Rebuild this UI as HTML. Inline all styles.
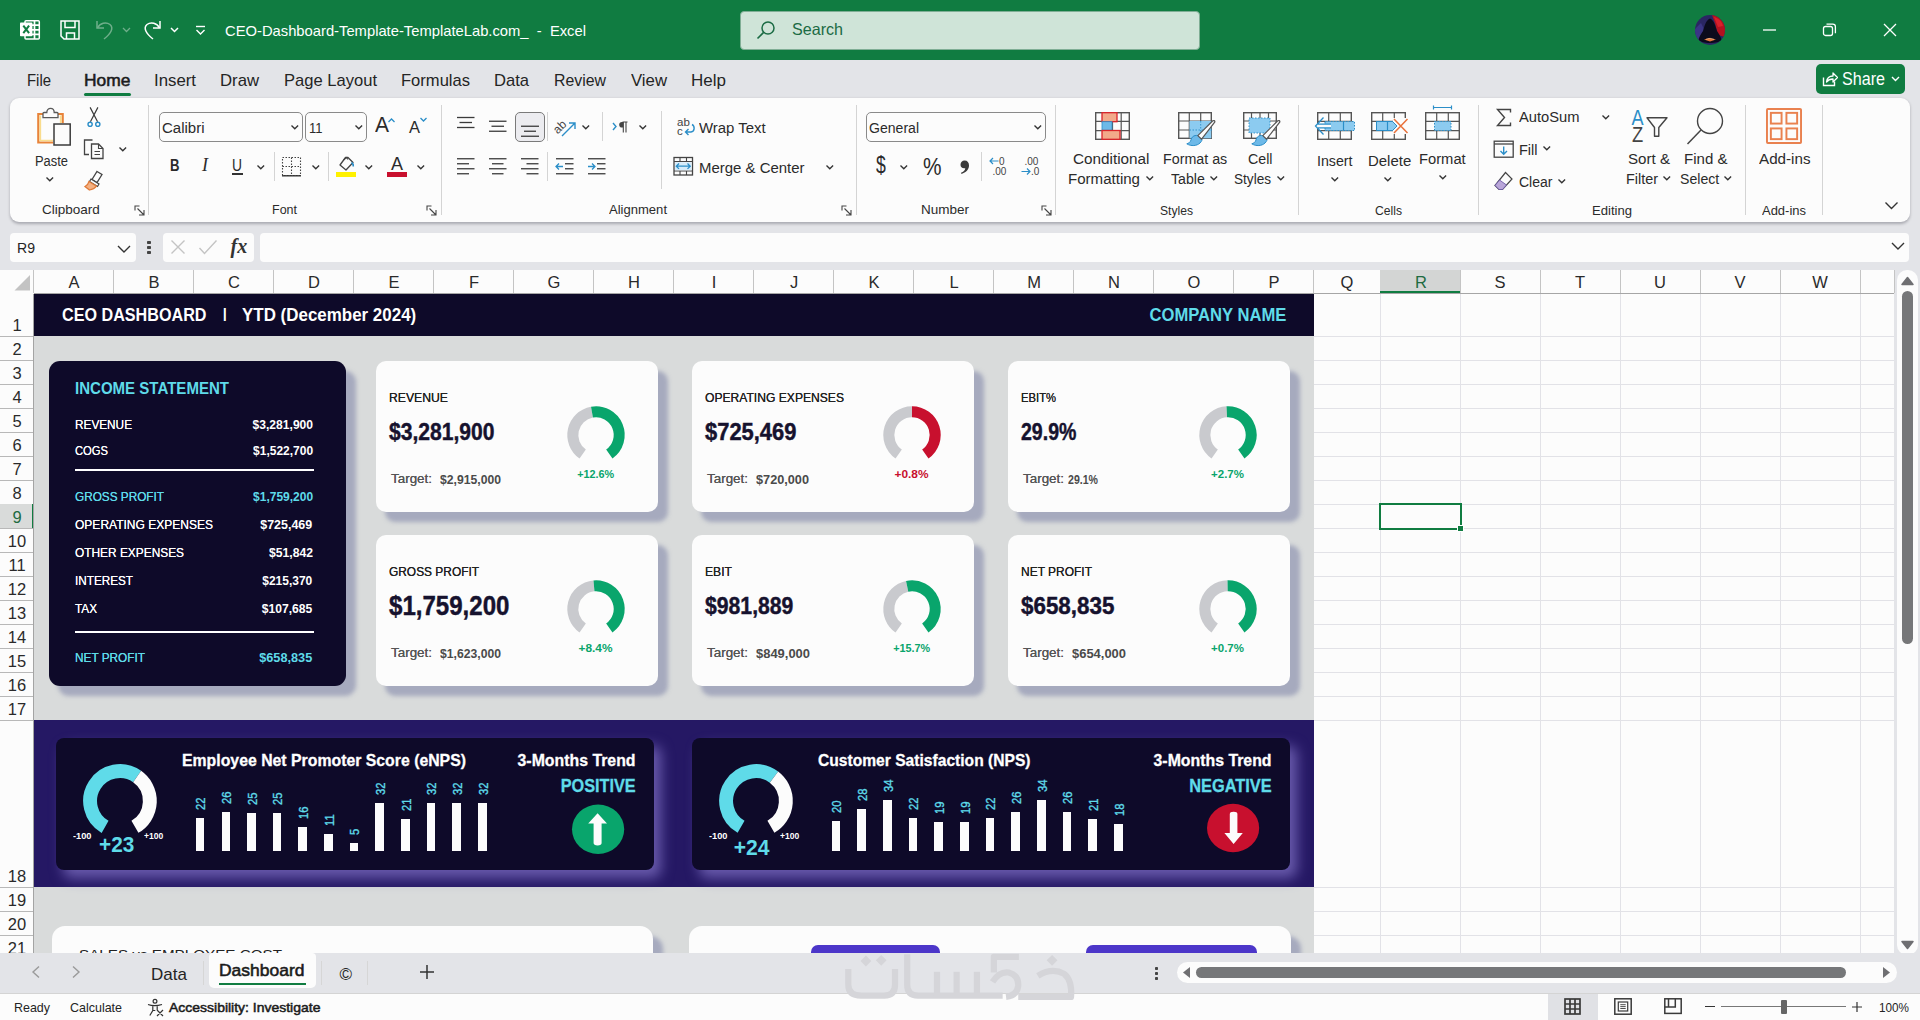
<!DOCTYPE html><html><head><meta charset="utf-8"><title>Excel</title><style>
html,body{margin:0;padding:0}body{width:1920px;height:1020px;overflow:hidden;position:relative;background:#E3E4E8;font-family:"Liberation Sans",sans-serif;}
div,svg{box-sizing:border-box}
</style></head><body>
<div style="position:absolute;left:0px;top:0px;width:1920px;height:60px;background:#107C41;"></div>
<svg style="position:absolute;left:20px;top:19px;" width="22" height="22" viewBox="0 0 22 22"><g fill="none" stroke="#fff" stroke-width="1.500"><rect x="5" y="1.700" width="14.300" height="18.300" rx="1"/><path d="M12 6.200h7.300M12 10.800h7.300M12 15.400h7.300M14.500 1.700v18.300" stroke-width="1.700"/></g><rect x="0" y="3.600" width="12.400" height="13.600" rx="0.800" fill="#fff"/><path d="M3.300 6.600l5.800 7.600M9.100 6.600l-5.800 7.600" stroke="#107C41" stroke-width="2"/></svg>
<svg style="position:absolute;left:60px;top:20px;" width="20" height="20" viewBox="0 0 20 20"><g fill="none" stroke="#fff" stroke-width="1.500"><path d="M1 1h18v18H4l-3-3z"/><path d="M5 1v6.500h10V1M6.500 19v-6h8v6"/></g></svg>
<svg style="position:absolute;left:96px;top:20px;" width="20" height="20" viewBox="0 0 20 20"><g fill="none" stroke="#6fae8a" stroke-width="1.5"><path d="M1 1v7h7"/><path d="M1.5 8C4 3 10 1.5 14 4.5c4 3.5 1 9-6 14.5"/></g></svg>
<svg style="position:absolute;left:122px;top:27px;" width="9" height="6" viewBox="0 0 9 6"><path d="M1 1l3.5 3.5L8 1" fill="none" stroke="#6fae8a" stroke-width="1.3"/></svg>
<svg style="position:absolute;left:141px;top:20px;" width="20" height="20" viewBox="0 0 20 20"><g fill="none" stroke="#fff" stroke-width="1.5"><path d="M19 1v7h-7"/><path d="M18.5 8C16 3 10 1.5 6 4.5c-4 3.5-1 9 6 14.5"/></g></svg>
<svg style="position:absolute;left:170px;top:27px;" width="9" height="6" viewBox="0 0 9 6"><path d="M1 1l3.5 3.5L8 1" fill="none" stroke="#fff" stroke-width="1.5"/></svg>
<svg style="position:absolute;left:195px;top:25px;" width="11" height="11" viewBox="0 0 11 11"><path d="M1 1.5h9" stroke="#fff" stroke-width="1.4"/><path d="M1.5 5l4 4 4-4" fill="none" stroke="#fff" stroke-width="1.4"/></svg>
<div style="position:absolute;top:22.80px;font-size:15px;line-height:1;white-space:pre;color:#fff;font-weight:400;left:225.00px;transform-origin:0 0;transform:scaleX(0.9841);">CEO-Dashboard-Template-TemplateLab.com_  -  Excel</div>
<div style="position:absolute;left:740px;top:10.5px;width:460px;height:39px;background:#CFE4D8;border-radius:4px;border:1px solid #7fae95;"></div>
<svg style="position:absolute;left:756px;top:20px;" width="20" height="20" viewBox="0 0 20 20"><circle cx="12" cy="8" r="6" fill="none" stroke="#1b6b44" stroke-width="1.5"/><path d="M7.6 12.4L1.5 18.5" stroke="#1b6b44" stroke-width="1.6"/></svg>
<div style="position:absolute;top:21.03px;font-size:16.5px;line-height:1;white-space:pre;color:#1b6b44;font-weight:400;left:792.00px;transform-origin:0 0;transform:scaleX(0.9755);">Search</div>
<svg style="position:absolute;left:1695px;top:15px;" width="30" height="30" viewBox="0 0 30 30"><defs><clipPath id="av"><circle cx="15" cy="15" r="15"/></clipPath></defs><g clip-path="url(#av)"><rect width="30" height="30" fill="#2a2663"/><path d="M17 0h13v22l-7-2-3-12z" fill="#b3121f"/><path d="M19 2c4 1 8 4 9 9l-5 1z" fill="#d8202b"/><path d="M0 14l6-6 4 8-4 14H0z" fill="#3a3585"/><path d="M15 3.500C11 5 9.500 11 8 16c-2 3-4 6-4.500 9 3 4 20 4 23 0-.5-3-2.500-6-4.500-9C20.500 11 19 5 15 3.500z" fill="#0b0b1c"/><path d="M9 24.500l5-1.500 7 1.500-6 2z" fill="#e0763a"/><path d="M11 24.300l4-1 4 1" stroke="#f6c9a0" stroke-width="0.600" fill="none"/></g></svg>
<svg style="position:absolute;left:1763px;top:29px;" width="14" height="2" viewBox="0 0 14 2"><path d="M0 1h13" stroke="#fff" stroke-width="1.3"/></svg>
<svg style="position:absolute;left:1822px;top:22px;" width="16" height="16" viewBox="0 0 16 16"><rect x="1.5" y="4.5" width="9" height="9" rx="2" fill="none" stroke="#fff" stroke-width="1.3"/><path d="M4.5 2.2h6.3a2.6 2.6 0 0 1 2.6 2.6v6.4" fill="none" stroke="#fff" stroke-width="1.3"/></svg>
<svg style="position:absolute;left:1883px;top:23px;" width="14" height="14" viewBox="0 0 14 14"><path d="M1 1l12 12M13 1L1 13" stroke="#fff" stroke-width="1.3"/></svg>
<div style="position:absolute;top:71.61px;font-size:17px;line-height:1;white-space:pre;color:#242424;font-weight:400;left:27.00px;transform-origin:0 0;transform:scaleX(0.8761);">File</div>
<div style="position:absolute;top:71.61px;font-size:17px;line-height:1;white-space:pre;color:#1b1b1b;font-weight:400;left:84.30px;transform-origin:0 0;transform:scaleX(1.0232);-webkit-text-stroke:0.550px #1b1b1b;">Home</div>
<div style="position:absolute;top:71.61px;font-size:17px;line-height:1;white-space:pre;color:#242424;font-weight:400;left:154.00px;transform-origin:0 0;transform:scaleX(0.9878);">Insert</div>
<div style="position:absolute;top:71.61px;font-size:17px;line-height:1;white-space:pre;color:#242424;font-weight:400;left:220.00px;transform-origin:0 0;transform:scaleX(0.9831);">Draw</div>
<div style="position:absolute;top:71.61px;font-size:17px;line-height:1;white-space:pre;color:#242424;font-weight:400;left:284.00px;transform-origin:0 0;transform:scaleX(0.9742);">Page Layout</div>
<div style="position:absolute;top:71.61px;font-size:17px;line-height:1;white-space:pre;color:#242424;font-weight:400;left:401.00px;transform-origin:0 0;transform:scaleX(0.9739);">Formulas</div>
<div style="position:absolute;top:71.61px;font-size:17px;line-height:1;white-space:pre;color:#242424;font-weight:400;left:494.00px;transform-origin:0 0;transform:scaleX(0.9747);">Data</div>
<div style="position:absolute;top:71.61px;font-size:17px;line-height:1;white-space:pre;color:#242424;font-weight:400;left:554.00px;transform-origin:0 0;transform:scaleX(0.9329);">Review</div>
<div style="position:absolute;top:71.61px;font-size:17px;line-height:1;white-space:pre;color:#242424;font-weight:400;left:631.00px;transform-origin:0 0;transform:scaleX(0.9852);">View</div>
<div style="position:absolute;top:71.61px;font-size:17px;line-height:1;white-space:pre;color:#242424;font-weight:400;left:691.00px;transform-origin:0 0;">Help</div>
<div style="position:absolute;left:84px;top:93px;width:47px;height:3px;background:#107C41;border-radius:2px;"></div>
<div style="position:absolute;left:1816px;top:64px;width:89px;height:30px;background:#107C41;border-radius:5px;"></div>
<svg style="position:absolute;left:1822px;top:71px;" width="16" height="16" viewBox="0 0 16 16"><path d="M1.5 6.5v8h11v-4" fill="none" stroke="#fff" stroke-width="1.4"/><path d="M4.5 11c0.5-4 3-6 6.5-6V2l4.5 4.5L11 11V8c-3 0-5 1-6.500 3z" fill="none" stroke="#fff" stroke-width="1.3" stroke-linejoin="round"/></svg>
<div style="position:absolute;top:70.69px;font-size:17.5px;line-height:1;white-space:pre;color:#fff;font-weight:400;left:1842.00px;transform-origin:0 0;transform:scaleX(0.9208);">Share</div>
<svg style="position:absolute;left:1891px;top:76px;" width="9" height="6" viewBox="0 0 9 6"><path d="M1 1l3.5 3.5L8 1" fill="none" stroke="#fff" stroke-width="1.4"/></svg>
<div style="position:absolute;left:10px;top:98px;width:1900px;height:123.5px;background:#FCFCFC;border-radius:9px;box-shadow:0 1.500px 3px rgba(0,0,20,0.26);"></div>
<div style="position:absolute;top:202.57px;font-size:13.5px;line-height:1;white-space:pre;color:#2b2b2b;font-weight:400;left:42.00px;transform-origin:0 0;">Clipboard</div>
<div style="position:absolute;top:202.57px;font-size:13.5px;line-height:1;white-space:pre;color:#2b2b2b;font-weight:400;left:272.00px;transform-origin:0 0;transform:scaleX(0.9255);">Font</div>
<div style="position:absolute;top:202.57px;font-size:13.5px;line-height:1;white-space:pre;color:#2b2b2b;font-weight:400;left:609.00px;transform-origin:0 0;transform:scaleX(0.9662);">Alignment</div>
<div style="position:absolute;top:202.57px;font-size:13.5px;line-height:1;white-space:pre;color:#2b2b2b;font-weight:400;left:921.00px;transform-origin:0 0;">Number</div>
<div style="position:absolute;top:203.57px;font-size:13.5px;line-height:1;white-space:pre;color:#2b2b2b;font-weight:400;left:1160.00px;transform-origin:0 0;transform:scaleX(0.8977);">Styles</div>
<div style="position:absolute;top:203.57px;font-size:13.5px;line-height:1;white-space:pre;color:#2b2b2b;font-weight:400;left:1375.00px;transform-origin:0 0;transform:scaleX(0.8998);">Cells</div>
<div style="position:absolute;top:203.57px;font-size:13.5px;line-height:1;white-space:pre;color:#2b2b2b;font-weight:400;left:1592.00px;transform-origin:0 0;transform:scaleX(0.9690);">Editing</div>
<div style="position:absolute;top:203.57px;font-size:13.5px;line-height:1;white-space:pre;color:#2b2b2b;font-weight:400;left:1762.00px;transform-origin:0 0;transform:scaleX(0.9612);">Add-ins</div>
<div style="position:absolute;left:148px;top:105px;width:1px;height:110px;background:#d4d4d4;"></div>
<div style="position:absolute;left:441px;top:105px;width:1px;height:110px;background:#d4d4d4;"></div>
<div style="position:absolute;left:1055px;top:105px;width:1px;height:110px;background:#d4d4d4;"></div>
<div style="position:absolute;left:1298px;top:105px;width:1px;height:110px;background:#d4d4d4;"></div>
<div style="position:absolute;left:1478px;top:105px;width:1px;height:110px;background:#d4d4d4;"></div>
<div style="position:absolute;left:1745px;top:105px;width:1px;height:110px;background:#d4d4d4;"></div>
<div style="position:absolute;left:1822px;top:105px;width:1px;height:110px;background:#d4d4d4;"></div>
<div style="position:absolute;left:856px;top:105px;width:1px;height:110px;background:#d4d4d4;"></div>
<div style="position:absolute;left:661px;top:111px;width:1px;height:78px;background:#d4d4d4;"></div>
<svg style="position:absolute;left:134px;top:205px;" width="11" height="11" viewBox="0 0 11 11"><path d="M1 5.500V1h4.500M3.500 3.500L10 10M10 5v5H5" fill="none" stroke="#444" stroke-width="1.100"/></svg>
<svg style="position:absolute;left:426px;top:205px;" width="11" height="11" viewBox="0 0 11 11"><path d="M1 5.500V1h4.500M3.500 3.500L10 10M10 5v5H5" fill="none" stroke="#444" stroke-width="1.100"/></svg>
<svg style="position:absolute;left:841px;top:205px;" width="11" height="11" viewBox="0 0 11 11"><path d="M1 5.500V1h4.500M3.500 3.500L10 10M10 5v5H5" fill="none" stroke="#444" stroke-width="1.100"/></svg>
<svg style="position:absolute;left:1041px;top:205px;" width="11" height="11" viewBox="0 0 11 11"><path d="M1 5.500V1h4.500M3.500 3.500L10 10M10 5v5H5" fill="none" stroke="#444" stroke-width="1.100"/></svg>
<svg style="position:absolute;left:36px;top:106px;" width="37" height="41" viewBox="0 0 37 41"><path d="M7 8H2.300V36.500H17" fill="none" stroke="#E8833A" stroke-width="2.200"/><path d="M22 8h4.700V17" fill="none" stroke="#E8833A" stroke-width="2.200"/>
<path d="M4.300 9.500V34.500H17M24.700 9.500V17" fill="none" stroke="#F9DC8C" stroke-width="1.700"/>
<path d="M7 11.600V7.500Q7 6.500 8 6.500H10.800C10.800 1 18.200 1 18.200 6.500H21Q22 6.500 22 7.500V11.600Z" fill="#fcfcfc" stroke="#5a5a5a" stroke-width="1.300"/>
<rect x="18" y="18" width="16.200" height="21" fill="#fcfcfc" stroke="#3b3b3b" stroke-width="1.500"/></svg>
<div style="position:absolute;top:152.88px;font-size:15.5px;line-height:1;white-space:pre;color:#2b2b2b;font-weight:400;left:34.70px;transform-origin:0 0;transform:scaleX(0.8326);">Paste</div>
<svg style="position:absolute;left:45.2px;top:176.35px;" width="9.6" height="6.3" viewBox="0 0 9.6 6.3"><path d="M1.500 1.500l3.3 3.3l3.3 -3.3" fill="none" stroke="#333" stroke-width="1.35"/></svg>
<svg style="position:absolute;left:86px;top:106px;" width="16" height="22" viewBox="0 0 16 22"><path d="M4.100 1.400L11.600 15.700M11.900 1.400L4.400 15.700" stroke="#3b3b3b" stroke-width="1.200" fill="none"/><circle cx="4.100" cy="18.300" r="2.100" fill="none" stroke="#2b8ec8" stroke-width="1.400"/><circle cx="11.800" cy="18.300" r="2.100" fill="none" stroke="#2b8ec8" stroke-width="1.400"/></svg>
<svg style="position:absolute;left:83px;top:139px;" width="22" height="21" viewBox="0 0 22 21"><path d="M6 15.500H1.500V1h8l0 0" fill="none" stroke="#444" stroke-width="1.300"/><path d="M8.500 5h7l4.500 4.500V19.500H8.500z" fill="#fcfcfc" stroke="#444" stroke-width="1.300"/><path d="M15.500 5v4.500h4.500M11.500 12.500h5.500M11.500 15.500h5.500" fill="none" stroke="#444" stroke-width="1.100"/></svg>
<svg style="position:absolute;left:118.2px;top:145.85px;" width="9.6" height="6.3" viewBox="0 0 9.6 6.3"><path d="M1.500 1.500l3.3 3.3l3.3 -3.3" fill="none" stroke="#333" stroke-width="1.35"/></svg>
<svg style="position:absolute;left:83px;top:170px;" width="22" height="21" viewBox="0 0 22 21"><path d="M14 1.500l5 3-5 8-5-3z" fill="#fcfcfc" stroke="#444" stroke-width="1.300"/><path d="M8 9l8 5-1.500 2.500-8-5z" fill="#fcfcfc" stroke="#444" stroke-width="1.200"/><path d="M6 11.500l7.500 4.700c-1.500 2-4.500 3.500-7 3.800L2 16.500c2-1 3.500-3 4-5z" fill="#F4B183" stroke="#E07B39" stroke-width="1.200"/></svg>
<div style="position:absolute;left:159px;top:112px;width:144px;height:30px;background:#FCFCFC;border:1px solid #8a8a8a;border-radius:5px;"></div>
<div style="position:absolute;top:119.88px;font-size:15.5px;line-height:1;white-space:pre;color:#2b2b2b;font-weight:400;left:162.00px;transform-origin:0 0;transform:scaleX(0.9675);">Calibri</div>
<svg style="position:absolute;left:290.2px;top:124.35px;" width="9.6" height="6.3" viewBox="0 0 9.6 6.3"><path d="M1.500 1.500l3.3 3.3l3.3 -3.3" fill="none" stroke="#333" stroke-width="1.35"/></svg>
<div style="position:absolute;left:305px;top:112px;width:62px;height:30px;background:#FCFCFC;border:1px solid #8a8a8a;border-radius:5px;"></div>
<div style="position:absolute;top:119.88px;font-size:15.5px;line-height:1;white-space:pre;color:#2b2b2b;font-weight:400;left:309.00px;transform-origin:0 0;transform:scaleX(0.8390);">11</div>
<svg style="position:absolute;left:354.2px;top:124.35px;" width="9.6" height="6.3" viewBox="0 0 9.6 6.3"><path d="M1.500 1.500l3.3 3.3l3.3 -3.3" fill="none" stroke="#333" stroke-width="1.35"/></svg>
<div style="position:absolute;top:114.80px;font-size:21.5px;line-height:1;white-space:pre;color:#2b2b2b;font-weight:400;left:375.00px;transform-origin:0 0;transform:scaleX(0.9763);">A</div>
<svg style="position:absolute;left:387px;top:117px;" width="9" height="6" viewBox="0 0 9 6"><path d="M1.500 5l3-3 3 3" fill="none" stroke="#2b8ec8" stroke-width="1.300"/></svg>
<div style="position:absolute;top:119.03px;font-size:16.5px;line-height:1;white-space:pre;color:#2b2b2b;font-weight:400;left:409.00px;transform-origin:0 0;">A</div>
<svg style="position:absolute;left:419px;top:117px;" width="9" height="6" viewBox="0 0 9 6"><path d="M1.500 1l3 3 3-3" fill="none" stroke="#2b8ec8" stroke-width="1.300"/></svg>
<div style="position:absolute;top:157.33px;font-size:16.5px;line-height:1;white-space:pre;color:#2b2b2b;font-weight:700;left:169.50px;transform-origin:0 0;transform:scaleX(0.7973);">B</div>
<div style="position:absolute;left:202px;top:156.300px;font-family:'Liberation Serif',serif;font-style:italic;font-size:18px;line-height:1;color:#2b2b2b;">I</div>
<div style="position:absolute;top:158.46px;font-size:16px;line-height:1;white-space:pre;color:#2b2b2b;font-weight:400;left:232.00px;transform-origin:0 0;transform:scaleX(0.8654);">U</div>
<div style="position:absolute;left:231.5px;top:173.4px;width:11px;height:1.3px;background:#333;"></div>
<svg style="position:absolute;left:256.2px;top:164.35px;" width="9.6" height="6.3" viewBox="0 0 9.6 6.3"><path d="M1.500 1.500l3.3 3.3l3.3 -3.3" fill="none" stroke="#333" stroke-width="1.35"/></svg>
<div style="position:absolute;left:274px;top:152px;width:1px;height:29px;background:#d4d4d4;"></div>
<svg style="position:absolute;left:281px;top:156px;" width="21" height="21" viewBox="0 0 21 21"><rect x="1.500" y="1.500" width="18" height="18" fill="none" stroke="#444" stroke-width="1.100" stroke-dasharray="1.500 1.500"/><path d="M10.500 1.500v18M1.500 10.500h18" stroke="#444" stroke-width="1.100" stroke-dasharray="1.500 1.500"/><path d="M1 19.800h19" stroke="#333" stroke-width="1.400"/></svg>
<svg style="position:absolute;left:310.7px;top:164.35px;" width="9.6" height="6.3" viewBox="0 0 9.6 6.3"><path d="M1.500 1.500l3.3 3.3l3.3 -3.3" fill="none" stroke="#333" stroke-width="1.35"/></svg>
<div style="position:absolute;left:328px;top:152px;width:1px;height:29px;background:#d4d4d4;"></div>
<svg style="position:absolute;left:337px;top:156px;" width="20" height="16" viewBox="0 0 20 16"><path d="M8.500 1.500L3 9l6 5 7-7.500-5-5z" fill="none" stroke="#444" stroke-width="1.300" stroke-linejoin="round"/><path d="M6.500 4l3 -2.500 1.500 2" fill="none" stroke="#444" stroke-width="1.100"/><path d="M14.500 6.500c1.500 1 2 2.500 1.800 4" fill="none" stroke="#2b8ec8" stroke-width="1.600"/></svg>
<div style="position:absolute;left:336px;top:172px;width:20px;height:5px;background:#FFF100;"></div>
<svg style="position:absolute;left:364.2px;top:164.35px;" width="9.6" height="6.3" viewBox="0 0 9.6 6.3"><path d="M1.500 1.500l3.3 3.3l3.3 -3.3" fill="none" stroke="#333" stroke-width="1.35"/></svg>
<div style="position:absolute;top:154.76px;font-size:18px;line-height:1;white-space:pre;color:#2b2b2b;font-weight:400;left:391.00px;transform-origin:0 0;">A</div>
<div style="position:absolute;left:387px;top:172px;width:20px;height:5px;background:#C8102E;"></div>
<svg style="position:absolute;left:415.7px;top:164.35px;" width="9.6" height="6.3" viewBox="0 0 9.6 6.3"><path d="M1.500 1.500l3.3 3.3l3.3 -3.3" fill="none" stroke="#333" stroke-width="1.35"/></svg>
<svg style="position:absolute;left:457px;top:110px;overflow:visible" width="20" height="20"><path d="M0 7.5H17.5" stroke="#3b3b3b" stroke-width="1.3"/><path d="M2.5 12.5H15" stroke="#3b3b3b" stroke-width="1.3"/><path d="M0 17.5H17.5" stroke="#3b3b3b" stroke-width="1.3"/></svg>
<svg style="position:absolute;left:489px;top:110px;overflow:visible" width="20" height="20"><path d="M0 11.25H17.5" stroke="#3b3b3b" stroke-width="1.3"/><path d="M2.5 16.25H15" stroke="#3b3b3b" stroke-width="1.3"/><path d="M0 21.25H17.5" stroke="#3b3b3b" stroke-width="1.3"/></svg>
<div style="position:absolute;left:515px;top:112px;width:30px;height:30px;background:#ECECF0;border:1px solid #7a7a7a;border-radius:5px;"></div>
<svg style="position:absolute;left:520.5px;top:110px;overflow:visible" width="20" height="20"><path d="M0 16.25H18" stroke="#3b3b3b" stroke-width="1.3"/><path d="M3 21.25H15" stroke="#3b3b3b" stroke-width="1.3"/><path d="M0 26.25H18" stroke="#3b3b3b" stroke-width="1.3"/></svg>
<div style="position:absolute;left:547px;top:112px;width:1px;height:29px;background:#d4d4d4;"></div>
<svg style="position:absolute;left:554px;top:115px;" width="24" height="23" viewBox="0 0 24 23"><g transform="rotate(-45 8 11)"><text x="-1" y="14" font-family="Liberation Sans" font-size="12" fill="#444">ab</text></g><path d="M8 21L20.500 8.500M15 8h6v6" fill="none" stroke="#2b8ec8" stroke-width="1.400"/></svg>
<svg style="position:absolute;left:581.2px;top:124.35px;" width="9.6" height="6.3" viewBox="0 0 9.6 6.3"><path d="M1.500 1.500l3.3 3.3l3.3 -3.3" fill="none" stroke="#333" stroke-width="1.35"/></svg>
<div style="position:absolute;left:602px;top:112px;width:1px;height:29px;background:#d4d4d4;"></div>
<svg style="position:absolute;left:611px;top:119px;" width="18" height="16" viewBox="0 0 18 16"><path d="M2 4l3 3.500-3 3.500" fill="none" stroke="#2b8ec8" stroke-width="1.400"/><path d="M12.300 3v10.500M15 3v10.500M16.500 3H11.500" fill="none" stroke="#444" stroke-width="1.100"/><path d="M12.300 3H11a2.800 2.800 0 0 0 0 5.600h1.300z" fill="#444"/></svg>
<svg style="position:absolute;left:638.2px;top:124.35px;" width="9.6" height="6.3" viewBox="0 0 9.6 6.3"><path d="M1.500 1.500l3.3 3.3l3.3 -3.3" fill="none" stroke="#333" stroke-width="1.35"/></svg>
<svg style="position:absolute;left:675px;top:116px;" width="21" height="22" viewBox="0 0 21 22"><text x="2" y="9.500" font-family="Liberation Sans" font-size="11.500" fill="#444">ab</text><text x="2" y="19" font-family="Liberation Sans" font-size="11.500" fill="#444">c</text><path d="M17 8.500c3 1.500 3 7-1 7.500h-5M13.500 13l-3 3 3 3" fill="none" stroke="#2b8ec8" stroke-width="1.400"/></svg>
<div style="position:absolute;top:119.88px;font-size:15.5px;line-height:1;white-space:pre;color:#2b2b2b;font-weight:400;left:699.00px;transform-origin:0 0;transform:scaleX(0.9638);">Wrap Text</div>
<svg style="position:absolute;left:457px;top:155px;overflow:visible" width="20" height="20"><path d="M0 3.75H17.5" stroke="#3b3b3b" stroke-width="1.3"/><path d="M0 8.75H12" stroke="#3b3b3b" stroke-width="1.3"/><path d="M0 13.75H17.5" stroke="#3b3b3b" stroke-width="1.3"/><path d="M0 18.75H12" stroke="#3b3b3b" stroke-width="1.3"/></svg>
<svg style="position:absolute;left:489px;top:155px;overflow:visible" width="20" height="20"><path d="M0 3.75H17.5" stroke="#3b3b3b" stroke-width="1.3"/><path d="M3 8.75H14.5" stroke="#3b3b3b" stroke-width="1.3"/><path d="M0 13.75H17.5" stroke="#3b3b3b" stroke-width="1.3"/><path d="M3 18.75H14.5" stroke="#3b3b3b" stroke-width="1.3"/></svg>
<svg style="position:absolute;left:521px;top:155px;overflow:visible" width="20" height="20"><path d="M0 3.75H17.5" stroke="#3b3b3b" stroke-width="1.3"/><path d="M5.5 8.75H17.5" stroke="#3b3b3b" stroke-width="1.3"/><path d="M0 13.75H17.5" stroke="#3b3b3b" stroke-width="1.3"/><path d="M5.5 18.75H17.5" stroke="#3b3b3b" stroke-width="1.3"/></svg>
<div style="position:absolute;left:547px;top:152px;width:1px;height:29px;background:#d4d4d4;"></div>
<svg style="position:absolute;left:555.7px;top:155px;overflow:visible" width="20" height="20"><path d="M0 3.75H17.5" stroke="#3b3b3b" stroke-width="1.3"/><path d="M9 8.75H17.5" stroke="#3b3b3b" stroke-width="1.3"/><path d="M9 13.75H17.5" stroke="#3b3b3b" stroke-width="1.3"/><path d="M0 18.75H17.5" stroke="#3b3b3b" stroke-width="1.3"/></svg>
<svg style="position:absolute;left:555px;top:162px;" width="10" height="10" viewBox="0 0 10 10"><path d="M8 4.500H1.500M4 1.500l-3 3 3 3" fill="none" stroke="#2b8ec8" stroke-width="1.300"/></svg>
<svg style="position:absolute;left:588px;top:155px;overflow:visible" width="20" height="20"><path d="M0 3.75H17.5" stroke="#3b3b3b" stroke-width="1.3"/><path d="M9 8.75H17.5" stroke="#3b3b3b" stroke-width="1.3"/><path d="M9 13.75H17.5" stroke="#3b3b3b" stroke-width="1.3"/><path d="M0 18.75H17.5" stroke="#3b3b3b" stroke-width="1.3"/></svg>
<svg style="position:absolute;left:587px;top:162px;" width="10" height="10" viewBox="0 0 10 10"><path d="M1 4.500H7.500M5 1.500l3 3-3 3" fill="none" stroke="#2b8ec8" stroke-width="1.300"/></svg>
<svg style="position:absolute;left:673px;top:156px;" width="21" height="21" viewBox="0 0 21 21"><rect x="1" y="1.500" width="18.500" height="17.500" fill="none" stroke="#444" stroke-width="1.300"/><path d="M1 5.500h18.500M1 15h18.500M7 1.500v4M13.500 1.500v4M7 15v4M13.500 15v4" stroke="#444" stroke-width="1.100"/><rect x="2" y="6.200" width="16.500" height="8" fill="#D6ECFA"/><path d="M3.500 10.200h13.500M6 7.500l-2.700 2.700 2.700 2.700M14.500 7.500l2.700 2.700-2.700 2.700" fill="none" stroke="#2b8ec8" stroke-width="1.300"/></svg>
<div style="position:absolute;top:160.38px;font-size:15.5px;line-height:1;white-space:pre;color:#2b2b2b;font-weight:400;left:699.00px;transform-origin:0 0;transform:scaleX(0.9643);">Merge &amp; Center</div>
<svg style="position:absolute;left:825.2px;top:164.35px;" width="9.6" height="6.3" viewBox="0 0 9.6 6.3"><path d="M1.500 1.500l3.3 3.3l3.3 -3.3" fill="none" stroke="#333" stroke-width="1.35"/></svg>
<div style="position:absolute;left:866px;top:112px;width:180px;height:30px;background:#FCFCFC;border:1px solid #8a8a8a;border-radius:5px;"></div>
<div style="position:absolute;top:119.88px;font-size:15.5px;line-height:1;white-space:pre;color:#2b2b2b;font-weight:400;left:869.00px;transform-origin:0 0;transform:scaleX(0.9067);">General</div>
<svg style="position:absolute;left:1033.2px;top:124.35px;" width="9.6" height="6.3" viewBox="0 0 9.6 6.3"><path d="M1.500 1.500l3.3 3.3l3.3 -3.3" fill="none" stroke="#333" stroke-width="1.35"/></svg>
<div style="position:absolute;top:154.03px;font-size:23px;line-height:1;white-space:pre;color:#2b2b2b;font-weight:400;left:875.70px;transform-origin:0 0;transform:scaleX(0.7661);">$</div>
<svg style="position:absolute;left:899.2px;top:164.35px;" width="9.6" height="6.3" viewBox="0 0 9.6 6.3"><path d="M1.500 1.500l3.3 3.3l3.3 -3.3" fill="none" stroke="#333" stroke-width="1.35"/></svg>
<div style="position:absolute;top:155.18px;font-size:24px;line-height:1;white-space:pre;color:#2b2b2b;font-weight:400;left:922.50px;transform-origin:0 0;transform:scaleX(0.8669);">%</div>
<svg style="position:absolute;left:958px;top:159px;" width="13" height="17" viewBox="0 0 13 17"><path d="M6.500 1.500c3 0 4.500 2 4.500 5 0 4-3 7-7.500 8.500l-.5-1.300c2.500-1 4-2.500 4.300-4.500-3 .500-4.800-1-4.800-3.500 0-2.500 1.800-4.200 4-4.200z" fill="#3a3a3a"/></svg>
<div style="position:absolute;left:981px;top:152px;width:1px;height:29px;background:#d4d4d4;"></div>
<svg style="position:absolute;left:988px;top:156px;" width="22" height="21" viewBox="0 0 22 21"><text x="11" y="8.500" font-family="Liberation Sans" font-size="10" fill="#444">0</text><text x="4.500" y="19" font-family="Liberation Sans" font-size="10" fill="#444">.00</text><path d="M10.500 5H2.500M5 2l-3 3 3 3" fill="none" stroke="#2b8ec8" stroke-width="1.200"/></svg>
<svg style="position:absolute;left:1020px;top:156px;" width="22" height="21" viewBox="0 0 22 21"><text x="4.500" y="8.500" font-family="Liberation Sans" font-size="10" fill="#444">.00</text><text x="11" y="19" font-family="Liberation Sans" font-size="10" fill="#444">.0</text><path d="M1.500 15.500h8M7 12.500l3 3-3 3" fill="none" stroke="#2b8ec8" stroke-width="1.200"/></svg>
<svg style="position:absolute;left:1094.5px;top:112px;overflow:visible" width="35" height="28"><rect x="0.700" y="0.700" width="33.6" height="26.6" fill="#fcfcfc" stroke="#555" stroke-width="1.400"/><path d="M8.8 0V28" stroke="#555" stroke-width="1.200"/><path d="M17.5 0V28" stroke="#555" stroke-width="1.200"/><path d="M26.2 0V28" stroke="#555" stroke-width="1.200"/><path d="M0 9.3H35" stroke="#555" stroke-width="1.200"/><path d="M0 18.7H35" stroke="#555" stroke-width="1.200"/><rect x="7" y="0.700" width="15" height="9" fill="#F2A98A" stroke="#D9242B" stroke-width="1.300"/><rect x="7" y="9.700" width="10" height="8.500" fill="#6DB9E8" stroke="#2b8ec8" stroke-width="0.800"/><rect x="7" y="18.500" width="18" height="8.800" fill="#F2A98A" stroke="#D9242B" stroke-width="1.300"/></svg>
<div style="position:absolute;top:150.58px;font-size:15.5px;line-height:1;white-space:pre;color:#2b2b2b;font-weight:400;left:1073.00px;transform-origin:0 0;transform:scaleX(0.9864);">Conditional</div>
<div style="position:absolute;top:170.58px;font-size:15.5px;line-height:1;white-space:pre;color:#2b2b2b;font-weight:400;left:1068.00px;transform-origin:0 0;transform:scaleX(0.9719);">Formatting</div>
<svg style="position:absolute;left:1144.7px;top:175.15px;" width="9.6" height="6.3" viewBox="0 0 9.6 6.3"><path d="M1.500 1.500l3.3 3.3l3.3 -3.3" fill="none" stroke="#333" stroke-width="1.35"/></svg>
<svg style="position:absolute;left:1177.5px;top:112px;overflow:visible" width="34" height="27"><rect x="0.700" y="0.700" width="32.6" height="25.6" fill="#fcfcfc" stroke="#555" stroke-width="1.400"/><path d="M11.3 0V27" stroke="#555" stroke-width="1.200"/><path d="M22.7 0V27" stroke="#555" stroke-width="1.200"/><path d="M0 9.0H34" stroke="#555" stroke-width="1.200"/><path d="M0 18.0H34" stroke="#555" stroke-width="1.200"/><rect x="11.500" y="9" width="21.800" height="17.300" fill="#8CCBF0"/><path d="M22.700 9V27M11.500 18H34" stroke="#2b8ec8" stroke-width="0.900" stroke-dasharray="1.500 1.500"/><path d="M19.500 23.500C16 23 13.500 25 13 28C12.500 30 10.500 31.500 8.800 31.800C13 34.500 19 34 22 31C24 29 24.300 27.500 23.800 27Z" fill="#6DB9E8" stroke="#2b8ec8" stroke-width="1"/><path d="M19.800 23.600L34.800 8.800Q36.600 8 36.900 9.800L23.600 27.200Z" fill="#fcfcfc" stroke="#555" stroke-width="1.200" stroke-linejoin="round"/></svg>
<div style="position:absolute;top:150.58px;font-size:15.5px;line-height:1;white-space:pre;color:#2b2b2b;font-weight:400;left:1162.50px;transform-origin:0 0;transform:scaleX(0.9202);">Format as</div>
<div style="position:absolute;top:170.58px;font-size:15.5px;line-height:1;white-space:pre;color:#2b2b2b;font-weight:400;left:1170.70px;transform-origin:0 0;transform:scaleX(0.9122);">Table</div>
<svg style="position:absolute;left:1208.9px;top:175.15px;" width="9.6" height="6.3" viewBox="0 0 9.6 6.3"><path d="M1.500 1.500l3.3 3.3l3.3 -3.3" fill="none" stroke="#333" stroke-width="1.35"/></svg>
<svg style="position:absolute;left:1242.5px;top:112px;overflow:visible" width="34" height="27"><rect x="0.700" y="0.700" width="32.6" height="25.6" fill="#fcfcfc" stroke="#555" stroke-width="1.400"/><path d="M8.5 0V27" stroke="#555" stroke-width="1.200"/><path d="M17.0 0V27" stroke="#555" stroke-width="1.200"/><path d="M25.5 0V27" stroke="#555" stroke-width="1.200"/><path d="M0 9.0H34" stroke="#555" stroke-width="1.200"/><path d="M0 18.0H34" stroke="#555" stroke-width="1.200"/><rect x="6" y="6" width="21" height="15" fill="#8CCBF0" stroke="#2b8ec8" stroke-width="0.900" stroke-dasharray="1.500 1.500"/><path d="M19.500 23.500C16 23 13.500 25 13 28C12.500 30 10.500 31.500 8.800 31.800C13 34.500 19 34 22 31C24 29 24.300 27.500 23.800 27Z" fill="#6DB9E8" stroke="#2b8ec8" stroke-width="1"/><path d="M19.800 23.600L34.800 8.800Q36.600 8 36.900 9.800L23.600 27.200Z" fill="#fcfcfc" stroke="#555" stroke-width="1.200" stroke-linejoin="round"/></svg>
<div style="position:absolute;top:150.58px;font-size:15.5px;line-height:1;white-space:pre;color:#2b2b2b;font-weight:400;left:1248.00px;transform-origin:0 0;transform:scaleX(0.9176);">Cell</div>
<div style="position:absolute;top:170.58px;font-size:15.5px;line-height:1;white-space:pre;color:#2b2b2b;font-weight:400;left:1234.00px;transform-origin:0 0;transform:scaleX(0.8766);">Styles</div>
<svg style="position:absolute;left:1275.7px;top:175.15px;" width="9.6" height="6.3" viewBox="0 0 9.6 6.3"><path d="M1.500 1.500l3.3 3.3l3.3 -3.3" fill="none" stroke="#333" stroke-width="1.35"/></svg>
<svg style="position:absolute;left:1317px;top:112px;overflow:visible" width="35" height="28"><rect x="0.700" y="0.700" width="33.6" height="26.6" fill="#fcfcfc" stroke="#555" stroke-width="1.400"/><path d="M11.7 0V28" stroke="#555" stroke-width="1.200"/><path d="M23.3 0V28" stroke="#555" stroke-width="1.200"/><path d="M0 9.3H35" stroke="#555" stroke-width="1.200"/><path d="M0 18.7H35" stroke="#555" stroke-width="1.200"/><rect x="8" y="9.500" width="29.500" height="9" fill="#8CCBF0" stroke="#2b8ec8" stroke-width="1" stroke-dasharray="1.500 1.500"/><path d="M14 14H-0.500" stroke="#fcfcfc" stroke-width="4"/><path d="M14 12.200H1M14 15.800H1M6.500 5.500L-1.500 14l8 8.500" fill="none" stroke="#2b8ec8" stroke-width="1.300"/><path d="M26.500 9.500v9" stroke="#2b8ec8" stroke-width="1.200"/></svg>
<div style="position:absolute;top:152.58px;font-size:15.5px;line-height:1;white-space:pre;color:#2b2b2b;font-weight:400;left:1317.00px;transform-origin:0 0;transform:scaleX(0.9158);">Insert</div>
<svg style="position:absolute;left:1329.7px;top:176.35px;" width="9.6" height="6.3" viewBox="0 0 9.6 6.3"><path d="M1.500 1.500l3.3 3.3l3.3 -3.3" fill="none" stroke="#333" stroke-width="1.35"/></svg>
<svg style="position:absolute;left:1371px;top:112px;overflow:visible" width="35" height="28"><rect x="0.700" y="0.700" width="33.6" height="26.6" fill="#fcfcfc" stroke="#555" stroke-width="1.400"/><path d="M11.7 0V28" stroke="#555" stroke-width="1.200"/><path d="M23.3 0V28" stroke="#555" stroke-width="1.200"/><path d="M0 9.3H35" stroke="#555" stroke-width="1.200"/><path d="M0 18.7H35" stroke="#555" stroke-width="1.200"/><rect x="22" y="6" width="14" height="16" fill="#fcfcfc"/><path d="M5.500 9.500H21.500L26 14L21.500 18.500H5.500Z" fill="#8CCBF0" stroke="#2b8ec8" stroke-width="1"/><path d="M16.500 9.500v9" stroke="#2b8ec8" stroke-width="1.200"/><rect x="0" y="0" width="0" height="0" fill="#8CCBF0" stroke="#2b8ec8" stroke-width="1" stroke-dasharray="1.500 1.500"/><path d="M23 7l13.500 14M36.500 7l-13.500 14" stroke="#E9713A" stroke-width="1.500"/><rect x="22" y="8" width="14" height="11" fill="#fcfcfc" opacity="0"/></svg>
<div style="position:absolute;top:152.58px;font-size:15.5px;line-height:1;white-space:pre;color:#2b2b2b;font-weight:400;left:1367.50px;transform-origin:0 0;transform:scaleX(0.9642);">Delete</div>
<svg style="position:absolute;left:1383.2px;top:176.35px;" width="9.6" height="6.3" viewBox="0 0 9.6 6.3"><path d="M1.500 1.500l3.3 3.3l3.3 -3.3" fill="none" stroke="#333" stroke-width="1.35"/></svg>
<svg style="position:absolute;left:1425px;top:112px;overflow:visible" width="35" height="28"><rect x="0.700" y="0.700" width="33.6" height="26.6" fill="#fcfcfc" stroke="#555" stroke-width="1.400"/><path d="M11.7 0V28" stroke="#555" stroke-width="1.200"/><path d="M23.3 0V28" stroke="#555" stroke-width="1.200"/><path d="M0 9.3H35" stroke="#555" stroke-width="1.200"/><path d="M0 18.7H35" stroke="#555" stroke-width="1.200"/><rect x="9.500" y="9.500" width="16.500" height="9" fill="#8CCBF0" stroke="#2b8ec8" stroke-width="1" stroke-dasharray="1.500 1.500"/><path d="M8.500 -4.500h18M8.500 -6.500v4M26.500 -6.500v4" stroke="#2b8ec8" stroke-width="1.200"/></svg>
<div style="position:absolute;top:150.58px;font-size:15.5px;line-height:1;white-space:pre;color:#2b2b2b;font-weight:400;left:1419.00px;transform-origin:0 0;transform:scaleX(0.9513);">Format</div>
<svg style="position:absolute;left:1437.7px;top:174.35px;" width="9.6" height="6.3" viewBox="0 0 9.6 6.3"><path d="M1.500 1.500l3.3 3.3l3.3 -3.3" fill="none" stroke="#333" stroke-width="1.35"/></svg>
<svg style="position:absolute;left:1495px;top:108px;" width="18" height="19" viewBox="0 0 18 19"><path d="M15.500 4.500V1.500H2.500l7 8-7 8h13v-3" fill="none" stroke="#444" stroke-width="1.400"/></svg>
<div style="position:absolute;top:109.38px;font-size:15.5px;line-height:1;white-space:pre;color:#2b2b2b;font-weight:400;left:1519.00px;transform-origin:0 0;transform:scaleX(0.9489);">AutoSum</div>
<svg style="position:absolute;left:1600.7px;top:114.35px;" width="9.6" height="6.3" viewBox="0 0 9.6 6.3"><path d="M1.500 1.500l3.3 3.3l3.3 -3.3" fill="none" stroke="#333" stroke-width="1.35"/></svg>
<svg style="position:absolute;left:1493px;top:140px;" width="22" height="19" viewBox="0 0 22 19"><rect x="1.200" y="1.200" width="19" height="16" fill="#fcfcfc" stroke="#444" stroke-width="1.300"/><path d="M1.200 4h19" stroke="#444" stroke-width="1.300"/><path d="M10.700 6.500v7.500M7.500 11l3.200 3.200L14 11" fill="none" stroke="#2b8ec8" stroke-width="1.400"/></svg>
<div style="position:absolute;top:141.88px;font-size:15.5px;line-height:1;white-space:pre;color:#2b2b2b;font-weight:400;left:1519.00px;transform-origin:0 0;transform:scaleX(0.9344);">Fill</div>
<svg style="position:absolute;left:1541.9px;top:144.85px;" width="9.6" height="6.3" viewBox="0 0 9.6 6.3"><path d="M1.500 1.500l3.3 3.3l3.3 -3.3" fill="none" stroke="#333" stroke-width="1.35"/></svg>
<svg style="position:absolute;left:1493px;top:171px;" width="21" height="21" viewBox="0 0 21 21"><path d="M12.500 1.500l6.500 6.500-9.500 10.500H6L2 14.500z" fill="#fcfcfc" stroke="#444" stroke-width="1.200"/><path d="M6.500 9l-4.500 5.500 4 4h3.500l4-4.500z" fill="#B9A6D9" stroke="#6d5aa8" stroke-width="0.900"/></svg>
<div style="position:absolute;top:173.88px;font-size:15.5px;line-height:1;white-space:pre;color:#2b2b2b;font-weight:400;left:1519.00px;transform-origin:0 0;transform:scaleX(0.9044);">Clear</div>
<svg style="position:absolute;left:1556.9px;top:177.85px;" width="9.6" height="6.3" viewBox="0 0 9.6 6.3"><path d="M1.500 1.500l3.3 3.3l3.3 -3.3" fill="none" stroke="#333" stroke-width="1.35"/></svg>
<svg style="position:absolute;left:1629px;top:107px;" width="40" height="38" viewBox="0 0 40 38"><text x="2.600" y="18" font-family="Liberation Sans" font-size="22" fill="#2b8ec8" textLength="12.100" lengthAdjust="spacingAndGlyphs">A</text><text x="2.900" y="34.900" font-family="Liberation Sans" font-size="22" fill="#444" textLength="11.200" lengthAdjust="spacingAndGlyphs">Z</text><path d="M18 10.700H38L29.800 20.500V29.300H25.500V20.500Z" fill="none" stroke="#444" stroke-width="1.400" stroke-linejoin="round"/></svg>
<div style="position:absolute;top:150.58px;font-size:15.5px;line-height:1;white-space:pre;color:#2b2b2b;font-weight:400;left:1627.50px;transform-origin:0 0;transform:scaleX(0.9751);">Sort &amp;</div>
<div style="position:absolute;top:170.58px;font-size:15.5px;line-height:1;white-space:pre;color:#2b2b2b;font-weight:400;left:1625.50px;transform-origin:0 0;transform:scaleX(0.9290);">Filter</div>
<svg style="position:absolute;left:1661.9px;top:175.15px;" width="9.6" height="6.3" viewBox="0 0 9.6 6.3"><path d="M1.500 1.500l3.3 3.3l3.3 -3.3" fill="none" stroke="#333" stroke-width="1.35"/></svg>
<svg style="position:absolute;left:1685px;top:106px;" width="42" height="42" viewBox="0 0 42 42"><circle cx="25" cy="15" r="12.500" fill="none" stroke="#444" stroke-width="1.400"/><path d="M16 24L2.500 38" stroke="#444" stroke-width="1.500"/></svg>
<div style="position:absolute;top:150.58px;font-size:15.5px;line-height:1;white-space:pre;color:#2b2b2b;font-weight:400;left:1684.00px;transform-origin:0 0;transform:scaleX(0.9710);">Find &amp;</div>
<div style="position:absolute;top:170.58px;font-size:15.5px;line-height:1;white-space:pre;color:#2b2b2b;font-weight:400;left:1679.50px;transform-origin:0 0;transform:scaleX(0.9099);">Select</div>
<svg style="position:absolute;left:1722.7px;top:175.15px;" width="9.6" height="6.3" viewBox="0 0 9.6 6.3"><path d="M1.500 1.500l3.3 3.3l3.3 -3.3" fill="none" stroke="#333" stroke-width="1.35"/></svg>
<svg style="position:absolute;left:1766px;top:108px;" width="36" height="36" viewBox="0 0 36 36"><g fill="none" stroke="#E9814F" stroke-width="2" transform="scale(0.973)"><rect x="1" y="1" width="35" height="35" rx="1"/><rect x="5" y="5" width="11" height="11"/><rect x="21" y="5" width="11" height="11"/><rect x="5" y="21" width="11" height="11"/><rect x="21" y="21" width="11" height="11"/></g></svg>
<div style="position:absolute;top:150.88px;font-size:15.5px;line-height:1;white-space:pre;color:#2b2b2b;font-weight:400;left:1758.50px;transform-origin:0 0;transform:scaleX(0.9799);">Add-ins</div>
<svg style="position:absolute;left:1884px;top:201px;" width="15" height="9" viewBox="0 0 15 9"><path d="M1.500 1.500l6 6 6-6" fill="none" stroke="#333" stroke-width="1.400"/></svg>
<div style="position:absolute;left:10px;top:232.5px;width:126px;height:29px;background:#FCFCFC;border-radius:4px;"></div>
<div style="position:absolute;top:240.73px;font-size:14.5px;line-height:1;white-space:pre;color:#242424;font-weight:400;left:17.00px;transform-origin:0 0;transform:scaleX(0.9711);">R9</div>
<svg style="position:absolute;left:117px;top:244.8px;" width="14" height="9" viewBox="0 0 14 9"><path d="M1 1l6 6 6-6" fill="none" stroke="#333" stroke-width="1.4"/></svg>
<div style="position:absolute;left:147.4px;top:240.8px;width:3.3px;height:3.3px;background:#444;border-radius:0.800px;"></div>
<div style="position:absolute;left:147.4px;top:246px;width:3.3px;height:3.3px;background:#444;border-radius:0.800px;"></div>
<div style="position:absolute;left:147.4px;top:251.2px;width:3.3px;height:3.3px;background:#444;border-radius:0.800px;"></div>
<div style="position:absolute;left:163px;top:232.5px;width:91px;height:29px;background:#FCFCFC;border-radius:4px;"></div>
<svg style="position:absolute;left:170px;top:239px;" width="16" height="16" viewBox="0 0 16 16"><path d="M1.500 1.500l13 13M14.500 1.500l-13 13" stroke="#c4c4c4" stroke-width="1.4"/></svg>
<svg style="position:absolute;left:198px;top:239px;" width="20" height="16" viewBox="0 0 20 16"><path d="M1.500 9l5 5.500L18.500 1.500" fill="none" stroke="#c4c4c4" stroke-width="1.4"/></svg>
<div style="position:absolute;left:230.500px;top:235.500px;font-family:'Liberation Serif',serif;font-style:italic;font-weight:700;font-size:20px;line-height:1;color:#333;">fx</div>
<div style="position:absolute;left:260px;top:232.5px;width:1649px;height:29px;background:#FCFCFC;border-radius:4px;"></div>
<svg style="position:absolute;left:1891px;top:242px;" width="14" height="9" viewBox="0 0 14 9"><path d="M1 1l6 6 6-6" fill="none" stroke="#333" stroke-width="1.4"/></svg>
<div style="position:absolute;left:0px;top:270px;width:1894px;height:683px;background:#FCFCFC;"></div>
<div style="position:absolute;top:274.03px;font-size:16.5px;line-height:1;white-space:pre;color:#2a2a2a;font-weight:400;left:68.50px;transform-origin:50% 0;">A</div>
<div style="position:absolute;left:113px;top:270px;width:1px;height:23px;background:#c4c4c4;"></div>
<div style="position:absolute;top:274.03px;font-size:16.5px;line-height:1;white-space:pre;color:#2a2a2a;font-weight:400;left:148.50px;transform-origin:50% 0;">B</div>
<div style="position:absolute;left:193px;top:270px;width:1px;height:23px;background:#c4c4c4;"></div>
<div style="position:absolute;top:274.03px;font-size:16.5px;line-height:1;white-space:pre;color:#2a2a2a;font-weight:400;left:228.04px;transform-origin:50% 0;">C</div>
<div style="position:absolute;left:273px;top:270px;width:1px;height:23px;background:#c4c4c4;"></div>
<div style="position:absolute;top:274.03px;font-size:16.5px;line-height:1;white-space:pre;color:#2a2a2a;font-weight:400;left:308.04px;transform-origin:50% 0;">D</div>
<div style="position:absolute;left:353px;top:270px;width:1px;height:23px;background:#c4c4c4;"></div>
<div style="position:absolute;top:274.03px;font-size:16.5px;line-height:1;white-space:pre;color:#2a2a2a;font-weight:400;left:388.50px;transform-origin:50% 0;">E</div>
<div style="position:absolute;left:433px;top:270px;width:1px;height:23px;background:#c4c4c4;"></div>
<div style="position:absolute;top:274.03px;font-size:16.5px;line-height:1;white-space:pre;color:#2a2a2a;font-weight:400;left:468.96px;transform-origin:50% 0;">F</div>
<div style="position:absolute;left:513px;top:270px;width:1px;height:23px;background:#c4c4c4;"></div>
<div style="position:absolute;top:274.03px;font-size:16.5px;line-height:1;white-space:pre;color:#2a2a2a;font-weight:400;left:547.58px;transform-origin:50% 0;">G</div>
<div style="position:absolute;left:593px;top:270px;width:1px;height:23px;background:#c4c4c4;"></div>
<div style="position:absolute;top:274.03px;font-size:16.5px;line-height:1;white-space:pre;color:#2a2a2a;font-weight:400;left:628.04px;transform-origin:50% 0;">H</div>
<div style="position:absolute;left:673px;top:270px;width:1px;height:23px;background:#c4c4c4;"></div>
<div style="position:absolute;top:274.03px;font-size:16.5px;line-height:1;white-space:pre;color:#2a2a2a;font-weight:400;left:711.71px;transform-origin:50% 0;">I</div>
<div style="position:absolute;left:753px;top:270px;width:1px;height:23px;background:#c4c4c4;"></div>
<div style="position:absolute;top:274.03px;font-size:16.5px;line-height:1;white-space:pre;color:#2a2a2a;font-weight:400;left:789.88px;transform-origin:50% 0;">J</div>
<div style="position:absolute;left:833px;top:270px;width:1px;height:23px;background:#c4c4c4;"></div>
<div style="position:absolute;top:274.03px;font-size:16.5px;line-height:1;white-space:pre;color:#2a2a2a;font-weight:400;left:868.50px;transform-origin:50% 0;">K</div>
<div style="position:absolute;left:913px;top:270px;width:1px;height:23px;background:#c4c4c4;"></div>
<div style="position:absolute;top:274.03px;font-size:16.5px;line-height:1;white-space:pre;color:#2a2a2a;font-weight:400;left:949.41px;transform-origin:50% 0;">L</div>
<div style="position:absolute;left:993px;top:270px;width:1px;height:23px;background:#c4c4c4;"></div>
<div style="position:absolute;top:274.03px;font-size:16.5px;line-height:1;white-space:pre;color:#2a2a2a;font-weight:400;left:1027.13px;transform-origin:50% 0;">M</div>
<div style="position:absolute;left:1073px;top:270px;width:1px;height:23px;background:#c4c4c4;"></div>
<div style="position:absolute;top:274.03px;font-size:16.5px;line-height:1;white-space:pre;color:#2a2a2a;font-weight:400;left:1108.04px;transform-origin:50% 0;">N</div>
<div style="position:absolute;left:1153px;top:270px;width:1px;height:23px;background:#c4c4c4;"></div>
<div style="position:absolute;top:274.03px;font-size:16.5px;line-height:1;white-space:pre;color:#2a2a2a;font-weight:400;left:1187.58px;transform-origin:50% 0;">O</div>
<div style="position:absolute;left:1233px;top:270px;width:1px;height:23px;background:#c4c4c4;"></div>
<div style="position:absolute;top:274.03px;font-size:16.5px;line-height:1;white-space:pre;color:#2a2a2a;font-weight:400;left:1268.50px;transform-origin:50% 0;">P</div>
<div style="position:absolute;left:1313px;top:270px;width:1px;height:23px;background:#c4c4c4;"></div>
<div style="position:absolute;top:274.03px;font-size:16.5px;line-height:1;white-space:pre;color:#2a2a2a;font-weight:400;left:1340.58px;transform-origin:50% 0;">Q</div>
<div style="position:absolute;left:1380px;top:270px;width:1px;height:23px;background:#c4c4c4;"></div>
<div style="position:absolute;left:1380px;top:270px;width:80px;height:23px;background:#D3D5D4;border-bottom:2px solid #107C41;"></div>
<div style="position:absolute;top:274.03px;font-size:16.5px;line-height:1;white-space:pre;color:#1e6b41;font-weight:400;left:1415.04px;transform-origin:50% 0;">R</div>
<div style="position:absolute;left:1460px;top:270px;width:1px;height:23px;background:#c4c4c4;"></div>
<div style="position:absolute;top:274.03px;font-size:16.5px;line-height:1;white-space:pre;color:#2a2a2a;font-weight:400;left:1494.50px;transform-origin:50% 0;">S</div>
<div style="position:absolute;left:1540px;top:270px;width:1px;height:23px;background:#c4c4c4;"></div>
<div style="position:absolute;top:274.03px;font-size:16.5px;line-height:1;white-space:pre;color:#2a2a2a;font-weight:400;left:1574.96px;transform-origin:50% 0;">T</div>
<div style="position:absolute;left:1620px;top:270px;width:1px;height:23px;background:#c4c4c4;"></div>
<div style="position:absolute;top:274.03px;font-size:16.5px;line-height:1;white-space:pre;color:#2a2a2a;font-weight:400;left:1654.04px;transform-origin:50% 0;">U</div>
<div style="position:absolute;left:1700px;top:270px;width:1px;height:23px;background:#c4c4c4;"></div>
<div style="position:absolute;top:274.03px;font-size:16.5px;line-height:1;white-space:pre;color:#2a2a2a;font-weight:400;left:1734.50px;transform-origin:50% 0;">V</div>
<div style="position:absolute;left:1780px;top:270px;width:1px;height:23px;background:#c4c4c4;"></div>
<div style="position:absolute;top:274.03px;font-size:16.5px;line-height:1;white-space:pre;color:#2a2a2a;font-weight:400;left:1812.21px;transform-origin:50% 0;">W</div>
<div style="position:absolute;left:1860px;top:270px;width:1px;height:23px;background:#c4c4c4;"></div>
<div style="position:absolute;left:1894px;top:270px;width:1px;height:23px;background:#c4c4c4;"></div>
<div style="position:absolute;left:33px;top:270px;width:1px;height:23px;background:#c4c4c4;"></div>
<div style="position:absolute;left:34px;top:293px;width:1860px;height:1px;background:#a6a6a6;"></div>
<svg style="position:absolute;left:13px;top:273.5px;" width="18" height="18" viewBox="0 0 18 18"><path d="M17 1v15.500H1.500z" fill="#c3c3c3"/></svg>
<div style="position:absolute;left:0px;top:336px;width:34px;height:1px;background:#b8b8b8;"></div>
<div style="position:absolute;left:1314px;top:336px;width:580px;height:1px;background:#E2E2E7;"></div>
<div style="position:absolute;top:316.53px;font-size:16.5px;line-height:1;white-space:pre;color:#2a2a2a;font-weight:400;left:12.41px;transform-origin:50% 0;">1</div>
<div style="position:absolute;left:0px;top:360px;width:34px;height:1px;background:#b8b8b8;"></div>
<div style="position:absolute;left:1314px;top:360px;width:580px;height:1px;background:#E2E2E7;"></div>
<div style="position:absolute;top:340.53px;font-size:16.5px;line-height:1;white-space:pre;color:#2a2a2a;font-weight:400;left:12.41px;transform-origin:50% 0;">2</div>
<div style="position:absolute;left:0px;top:384px;width:34px;height:1px;background:#b8b8b8;"></div>
<div style="position:absolute;left:1314px;top:384px;width:580px;height:1px;background:#E2E2E7;"></div>
<div style="position:absolute;top:364.53px;font-size:16.5px;line-height:1;white-space:pre;color:#2a2a2a;font-weight:400;left:12.41px;transform-origin:50% 0;">3</div>
<div style="position:absolute;left:0px;top:408px;width:34px;height:1px;background:#b8b8b8;"></div>
<div style="position:absolute;left:1314px;top:408px;width:580px;height:1px;background:#E2E2E7;"></div>
<div style="position:absolute;top:388.53px;font-size:16.5px;line-height:1;white-space:pre;color:#2a2a2a;font-weight:400;left:12.41px;transform-origin:50% 0;">4</div>
<div style="position:absolute;left:0px;top:432px;width:34px;height:1px;background:#b8b8b8;"></div>
<div style="position:absolute;left:1314px;top:432px;width:580px;height:1px;background:#E2E2E7;"></div>
<div style="position:absolute;top:412.53px;font-size:16.5px;line-height:1;white-space:pre;color:#2a2a2a;font-weight:400;left:12.41px;transform-origin:50% 0;">5</div>
<div style="position:absolute;left:0px;top:456px;width:34px;height:1px;background:#b8b8b8;"></div>
<div style="position:absolute;left:1314px;top:456px;width:580px;height:1px;background:#E2E2E7;"></div>
<div style="position:absolute;top:436.53px;font-size:16.5px;line-height:1;white-space:pre;color:#2a2a2a;font-weight:400;left:12.41px;transform-origin:50% 0;">6</div>
<div style="position:absolute;left:0px;top:480px;width:34px;height:1px;background:#b8b8b8;"></div>
<div style="position:absolute;left:1314px;top:480px;width:580px;height:1px;background:#E2E2E7;"></div>
<div style="position:absolute;top:460.53px;font-size:16.5px;line-height:1;white-space:pre;color:#2a2a2a;font-weight:400;left:12.41px;transform-origin:50% 0;">7</div>
<div style="position:absolute;left:0px;top:504px;width:34px;height:1px;background:#b8b8b8;"></div>
<div style="position:absolute;left:1314px;top:504px;width:580px;height:1px;background:#E2E2E7;"></div>
<div style="position:absolute;top:484.53px;font-size:16.5px;line-height:1;white-space:pre;color:#2a2a2a;font-weight:400;left:12.41px;transform-origin:50% 0;">8</div>
<div style="position:absolute;left:0px;top:504px;width:34px;height:24px;background:#D9DBDA;border-right:2px solid #107C41;"></div>
<div style="position:absolute;left:0px;top:528px;width:34px;height:1px;background:#b8b8b8;"></div>
<div style="position:absolute;left:1314px;top:528px;width:580px;height:1px;background:#E2E2E7;"></div>
<div style="position:absolute;top:508.53px;font-size:16.5px;line-height:1;white-space:pre;color:#1e6b41;font-weight:400;left:12.41px;transform-origin:50% 0;">9</div>
<div style="position:absolute;left:0px;top:552px;width:34px;height:1px;background:#b8b8b8;"></div>
<div style="position:absolute;left:1314px;top:552px;width:580px;height:1px;background:#E2E2E7;"></div>
<div style="position:absolute;top:532.53px;font-size:16.5px;line-height:1;white-space:pre;color:#2a2a2a;font-weight:400;left:7.82px;transform-origin:50% 0;">10</div>
<div style="position:absolute;left:0px;top:576px;width:34px;height:1px;background:#b8b8b8;"></div>
<div style="position:absolute;left:1314px;top:576px;width:580px;height:1px;background:#E2E2E7;"></div>
<div style="position:absolute;top:556.53px;font-size:16.5px;line-height:1;white-space:pre;color:#2a2a2a;font-weight:400;left:8.44px;transform-origin:50% 0;">11</div>
<div style="position:absolute;left:0px;top:600px;width:34px;height:1px;background:#b8b8b8;"></div>
<div style="position:absolute;left:1314px;top:600px;width:580px;height:1px;background:#E2E2E7;"></div>
<div style="position:absolute;top:580.53px;font-size:16.5px;line-height:1;white-space:pre;color:#2a2a2a;font-weight:400;left:7.82px;transform-origin:50% 0;">12</div>
<div style="position:absolute;left:0px;top:624px;width:34px;height:1px;background:#b8b8b8;"></div>
<div style="position:absolute;left:1314px;top:624px;width:580px;height:1px;background:#E2E2E7;"></div>
<div style="position:absolute;top:604.53px;font-size:16.5px;line-height:1;white-space:pre;color:#2a2a2a;font-weight:400;left:7.82px;transform-origin:50% 0;">13</div>
<div style="position:absolute;left:0px;top:648px;width:34px;height:1px;background:#b8b8b8;"></div>
<div style="position:absolute;left:1314px;top:648px;width:580px;height:1px;background:#E2E2E7;"></div>
<div style="position:absolute;top:628.53px;font-size:16.5px;line-height:1;white-space:pre;color:#2a2a2a;font-weight:400;left:7.82px;transform-origin:50% 0;">14</div>
<div style="position:absolute;left:0px;top:672px;width:34px;height:1px;background:#b8b8b8;"></div>
<div style="position:absolute;left:1314px;top:672px;width:580px;height:1px;background:#E2E2E7;"></div>
<div style="position:absolute;top:652.53px;font-size:16.5px;line-height:1;white-space:pre;color:#2a2a2a;font-weight:400;left:7.82px;transform-origin:50% 0;">15</div>
<div style="position:absolute;left:0px;top:696px;width:34px;height:1px;background:#b8b8b8;"></div>
<div style="position:absolute;left:1314px;top:696px;width:580px;height:1px;background:#E2E2E7;"></div>
<div style="position:absolute;top:676.53px;font-size:16.5px;line-height:1;white-space:pre;color:#2a2a2a;font-weight:400;left:7.82px;transform-origin:50% 0;">16</div>
<div style="position:absolute;left:0px;top:720px;width:34px;height:1px;background:#b8b8b8;"></div>
<div style="position:absolute;left:1314px;top:720px;width:580px;height:1px;background:#E2E2E7;"></div>
<div style="position:absolute;top:700.53px;font-size:16.5px;line-height:1;white-space:pre;color:#2a2a2a;font-weight:400;left:7.82px;transform-origin:50% 0;">17</div>
<div style="position:absolute;left:0px;top:887px;width:34px;height:1px;background:#b8b8b8;"></div>
<div style="position:absolute;left:1314px;top:887px;width:580px;height:1px;background:#E2E2E7;"></div>
<div style="position:absolute;top:867.53px;font-size:16.5px;line-height:1;white-space:pre;color:#2a2a2a;font-weight:400;left:7.82px;transform-origin:50% 0;">18</div>
<div style="position:absolute;left:0px;top:911px;width:34px;height:1px;background:#b8b8b8;"></div>
<div style="position:absolute;left:1314px;top:911px;width:580px;height:1px;background:#E2E2E7;"></div>
<div style="position:absolute;top:891.53px;font-size:16.5px;line-height:1;white-space:pre;color:#2a2a2a;font-weight:400;left:7.82px;transform-origin:50% 0;">19</div>
<div style="position:absolute;left:0px;top:935px;width:34px;height:1px;background:#b8b8b8;"></div>
<div style="position:absolute;left:1314px;top:935px;width:580px;height:1px;background:#E2E2E7;"></div>
<div style="position:absolute;top:915.53px;font-size:16.5px;line-height:1;white-space:pre;color:#2a2a2a;font-weight:400;left:7.82px;transform-origin:50% 0;">20</div>
<div style="position:absolute;top:939.53px;font-size:16.5px;line-height:1;white-space:pre;color:#2a2a2a;font-weight:400;left:7.82px;transform-origin:50% 0;">21</div>
<div style="position:absolute;left:33px;top:294px;width:1px;height:659px;background:#a4a4a4;"></div>
<div style="position:absolute;left:1380px;top:294px;width:1px;height:659px;background:#E2E2E7;"></div>
<div style="position:absolute;left:1460px;top:294px;width:1px;height:659px;background:#E2E2E7;"></div>
<div style="position:absolute;left:1540px;top:294px;width:1px;height:659px;background:#E2E2E7;"></div>
<div style="position:absolute;left:1620px;top:294px;width:1px;height:659px;background:#E2E2E7;"></div>
<div style="position:absolute;left:1700px;top:294px;width:1px;height:659px;background:#E2E2E7;"></div>
<div style="position:absolute;left:1780px;top:294px;width:1px;height:659px;background:#E2E2E7;"></div>
<div style="position:absolute;left:1860px;top:294px;width:1px;height:659px;background:#E2E2E7;"></div>
<div style="position:absolute;left:1379px;top:503px;width:83px;height:27px;background:transparent;border:2px solid #107C41;"></div>
<div style="position:absolute;left:1457px;top:525px;width:7px;height:7px;background:#107C41;border:1px solid #fff;"></div>
<div style="position:absolute;left:1896px;top:270px;width:24px;height:683px;background:#E3E4E8;"></div>
<div style="position:absolute;left:1897px;top:270px;width:21px;height:685px;background:#FCFCFC;border-radius:10px;"></div>
<svg style="position:absolute;left:1900px;top:275.5px;" width="15" height="10" viewBox="0 0 15 10"><path d="M7.500 1.500L13 8.500H2z" fill="#6f6f72" stroke="#6f6f72" stroke-width="1.500" stroke-linejoin="round"/></svg>
<svg style="position:absolute;left:1900px;top:939.5px;" width="15" height="10" viewBox="0 0 15 10"><path d="M7.500 8.500L13 1.500H2z" fill="#6f6f72" stroke="#6f6f72" stroke-width="1.500" stroke-linejoin="round"/></svg>
<div style="position:absolute;left:1902px;top:290.5px;width:11px;height:353.5px;background:#767779;border-radius:6px;"></div>
<div style="position:absolute;left:34px;top:294px;width:1280px;height:42px;background:#0E0A29;"></div>
<div style="position:absolute;left:34px;top:336px;width:1280px;height:384px;background:#D9DBDB;"></div>
<div style="position:absolute;left:34px;top:720px;width:1280px;height:167px;background:#251864;"></div>
<div style="position:absolute;left:34px;top:887px;width:1280px;height:66px;background:#D9DBDB;"></div>
<div style="position:absolute;top:305.74px;font-size:18.5px;line-height:1;white-space:pre;color:#fff;font-weight:700;left:61.50px;transform-origin:0 0;transform:scaleX(0.8732);">CEO DASHBOARD</div>
<div style="position:absolute;top:305.74px;font-size:18.5px;line-height:1;white-space:pre;color:#fff;font-weight:700;left:222.60px;transform-origin:0 0;transform:scaleX(0.7004);">I</div>
<div style="position:absolute;top:305.74px;font-size:18.5px;line-height:1;white-space:pre;color:#fff;font-weight:700;left:241.50px;transform-origin:0 0;transform:scaleX(0.9158);">YTD (December 2024)</div>
<div style="position:absolute;top:305.74px;font-size:18.5px;line-height:1;white-space:pre;color:#5FDBE9;font-weight:700;left:1133.54px;transform-origin:100% 0;transform:scaleX(0.8986);">COMPANY NAME</div>
<div style="position:absolute;left:49px;top:361px;width:297px;height:325px;background:#0E0A29;border-radius:11px;box-shadow:9.500px 10px 4.500px rgba(126,132,168,0.56);"></div>
<div style="position:absolute;top:379.61px;font-size:17px;line-height:1;white-space:pre;color:#5FDBE9;font-weight:700;left:74.50px;transform-origin:0 0;transform:scaleX(0.8846);">INCOME STATEMENT</div>
<div style="position:absolute;top:418.00px;font-size:13px;line-height:1;white-space:pre;color:#fff;font-weight:400;left:74.50px;transform-origin:0 0;transform:scaleX(0.9069);text-shadow:0 0 0.500px #fff;">REVENUE</div>
<div style="position:absolute;top:417.50px;font-size:13px;line-height:1;white-space:pre;color:#fff;font-weight:700;left:247.64px;transform-origin:100% 0;transform:scaleX(0.9299);">$3,281,900</div>
<div style="position:absolute;top:444.00px;font-size:13px;line-height:1;white-space:pre;color:#fff;font-weight:400;left:74.50px;transform-origin:0 0;transform:scaleX(0.8620);text-shadow:0 0 0.500px #fff;">COGS</div>
<div style="position:absolute;top:443.50px;font-size:13px;line-height:1;white-space:pre;color:#fff;font-weight:700;left:247.64px;transform-origin:100% 0;transform:scaleX(0.9222);">$1,522,700</div>
<div style="position:absolute;top:490.00px;font-size:13px;line-height:1;white-space:pre;color:#5FDBE9;font-weight:400;left:74.50px;transform-origin:0 0;transform:scaleX(0.9060);text-shadow:0 0 0.500px #5FDBE9;">GROSS PROFIT</div>
<div style="position:absolute;top:489.50px;font-size:13px;line-height:1;white-space:pre;color:#5FDBE9;font-weight:700;left:247.64px;transform-origin:100% 0;transform:scaleX(0.9222);">$1,759,200</div>
<div style="position:absolute;top:518.00px;font-size:13px;line-height:1;white-space:pre;color:#fff;font-weight:400;left:74.50px;transform-origin:0 0;transform:scaleX(0.9243);text-shadow:0 0 0.500px #fff;">OPERATING EXPENSES</div>
<div style="position:absolute;top:517.50px;font-size:13px;line-height:1;white-space:pre;color:#fff;font-weight:700;left:258.48px;transform-origin:100% 0;transform:scaleX(0.9590);">$725,469</div>
<div style="position:absolute;top:546.00px;font-size:13px;line-height:1;white-space:pre;color:#fff;font-weight:400;left:74.50px;transform-origin:0 0;transform:scaleX(0.9145);text-shadow:0 0 0.500px #fff;">OTHER EXPENSES</div>
<div style="position:absolute;top:545.50px;font-size:13px;line-height:1;white-space:pre;color:#fff;font-weight:700;left:265.71px;transform-origin:100% 0;transform:scaleX(0.9363);">$51,842</div>
<div style="position:absolute;top:574.00px;font-size:13px;line-height:1;white-space:pre;color:#fff;font-weight:400;left:74.50px;transform-origin:0 0;transform:scaleX(0.9023);text-shadow:0 0 0.500px #fff;">INTEREST</div>
<div style="position:absolute;top:573.50px;font-size:13px;line-height:1;white-space:pre;color:#fff;font-weight:700;left:258.48px;transform-origin:100% 0;transform:scaleX(0.9221);">$215,370</div>
<div style="position:absolute;top:602.00px;font-size:13px;line-height:1;white-space:pre;color:#fff;font-weight:400;left:74.50px;transform-origin:0 0;transform:scaleX(0.9047);text-shadow:0 0 0.500px #fff;">TAX</div>
<div style="position:absolute;top:601.50px;font-size:13px;line-height:1;white-space:pre;color:#fff;font-weight:700;left:258.48px;transform-origin:100% 0;transform:scaleX(0.9314);">$107,685</div>
<div style="position:absolute;top:651.00px;font-size:13px;line-height:1;white-space:pre;color:#5FDBE9;font-weight:400;left:74.50px;transform-origin:0 0;transform:scaleX(0.9086);text-shadow:0 0 0.500px #5FDBE9;">NET PROFIT</div>
<div style="position:absolute;top:650.50px;font-size:13px;line-height:1;white-space:pre;color:#5FDBE9;font-weight:700;left:258.48px;transform-origin:100% 0;transform:scaleX(0.9775);">$658,835</div>
<div style="position:absolute;left:75px;top:469px;width:239px;height:2px;background:#fff;"></div>
<div style="position:absolute;left:75px;top:631px;width:239px;height:2px;background:#fff;"></div>
<div style="position:absolute;left:376px;top:361px;width:282px;height:151px;background:#FCFCFC;border-radius:10px;box-shadow:9.500px 10px 4.500px rgba(126,132,168,0.56);"></div>
<div style="position:absolute;top:391.92px;font-size:12.5px;line-height:1;white-space:pre;color:#222;font-weight:400;left:389.00px;transform-origin:0 0;transform:scaleX(0.9763);text-shadow:0 0 0.400px #222;">REVENUE</div>
<div style="position:absolute;top:419.68px;font-size:24px;line-height:1;white-space:pre;color:#16122E;font-weight:700;left:389.30px;transform-origin:0 0;transform:scaleX(0.8775);-webkit-text-stroke:0.450px #16122E;">$3,281,900</div>
<div style="position:absolute;top:471.70px;font-size:13px;line-height:1;white-space:pre;color:#555;font-weight:400;left:390.50px;transform-origin:0 0;transform:scaleX(1.0316);text-shadow:0 0 0.400px #555;">Target:</div>
<div style="position:absolute;top:474.42px;font-size:12.5px;line-height:1;white-space:pre;color:#4a4a4a;font-weight:700;left:440.00px;transform-origin:0 0;transform:scaleX(0.9750);">$2,915,000</div>
<svg style="position:absolute;left:555.6px;top:395.4px;" width="80" height="80" viewBox="0 0 80 80"><path d="M26.69 59.00A23.2 23.2 0 0 1 35.97 17.15" fill="none" stroke="#C9CACE" stroke-width="11.0"/><path d="M35.97 17.15A23.2 23.2 0 0 1 53.31 59.00" fill="none" stroke="#09A56C" stroke-width="11.0"/></svg>
<div style="position:absolute;top:468.87px;font-size:11.5px;line-height:1;white-space:pre;color:#09A56C;font-weight:700;left:575.84px;transform-origin:50% 0;transform:scaleX(0.9409);">+12.6%</div>
<div style="position:absolute;left:692px;top:361px;width:282px;height:151px;background:#FCFCFC;border-radius:10px;box-shadow:9.500px 10px 4.500px rgba(126,132,168,0.56);"></div>
<div style="position:absolute;top:391.92px;font-size:12.5px;line-height:1;white-space:pre;color:#222;font-weight:400;left:705.00px;transform-origin:0 0;transform:scaleX(0.9683);text-shadow:0 0 0.400px #222;">OPERATING EXPENSES</div>
<div style="position:absolute;top:419.68px;font-size:24px;line-height:1;white-space:pre;color:#16122E;font-weight:700;left:705.30px;transform-origin:0 0;transform:scaleX(0.9131);-webkit-text-stroke:0.450px #16122E;">$725,469</div>
<div style="position:absolute;top:471.70px;font-size:13px;line-height:1;white-space:pre;color:#555;font-weight:400;left:706.50px;transform-origin:0 0;transform:scaleX(1.0316);text-shadow:0 0 0.400px #555;">Target:</div>
<div style="position:absolute;top:474.42px;font-size:12.5px;line-height:1;white-space:pre;color:#4a4a4a;font-weight:700;left:756.00px;transform-origin:0 0;transform:scaleX(1.0166);">$720,000</div>
<svg style="position:absolute;left:871.6px;top:395.4px;" width="80" height="80" viewBox="0 0 80 80"><path d="M26.69 59.00A23.2 23.2 0 0 1 40.00 16.80" fill="none" stroke="#C9CACE" stroke-width="11.0"/><path d="M40.00 16.80A23.2 23.2 0 0 1 53.31 59.00" fill="none" stroke="#C8102E" stroke-width="11.0"/></svg>
<div style="position:absolute;top:468.87px;font-size:11.5px;line-height:1;white-space:pre;color:#C8102E;font-weight:700;left:895.04px;transform-origin:50% 0;transform:scaleX(1.0326);">+0.8%</div>
<div style="position:absolute;left:1008px;top:361px;width:282px;height:151px;background:#FCFCFC;border-radius:10px;box-shadow:9.500px 10px 4.500px rgba(126,132,168,0.56);"></div>
<div style="position:absolute;top:391.92px;font-size:12.5px;line-height:1;white-space:pre;color:#222;font-weight:400;left:1021.00px;transform-origin:0 0;transform:scaleX(0.8998);text-shadow:0 0 0.400px #222;">EBIT%</div>
<div style="position:absolute;top:419.68px;font-size:24px;line-height:1;white-space:pre;color:#16122E;font-weight:700;left:1021.30px;transform-origin:0 0;transform:scaleX(0.8141);-webkit-text-stroke:0.450px #16122E;">29.9%</div>
<div style="position:absolute;top:471.70px;font-size:13px;line-height:1;white-space:pre;color:#555;font-weight:400;left:1022.50px;transform-origin:0 0;transform:scaleX(1.0316);text-shadow:0 0 0.400px #555;">Target:</div>
<div style="position:absolute;top:474.42px;font-size:12.5px;line-height:1;white-space:pre;color:#4a4a4a;font-weight:700;left:1068.00px;transform-origin:0 0;transform:scaleX(0.8464);">29.1%</div>
<svg style="position:absolute;left:1187.6px;top:395.4px;" width="80" height="80" viewBox="0 0 80 80"><path d="M26.69 59.00A23.2 23.2 0 0 1 38.79 16.83" fill="none" stroke="#C9CACE" stroke-width="11.0"/><path d="M38.79 16.83A23.2 23.2 0 0 1 53.31 59.00" fill="none" stroke="#09A56C" stroke-width="11.0"/></svg>
<div style="position:absolute;top:468.87px;font-size:11.5px;line-height:1;white-space:pre;color:#09A56C;font-weight:700;left:1211.04px;transform-origin:50% 0;">+2.7%</div>
<div style="position:absolute;left:376px;top:535px;width:282px;height:151px;background:#FCFCFC;border-radius:10px;box-shadow:9.500px 10px 4.500px rgba(126,132,168,0.56);"></div>
<div style="position:absolute;top:565.92px;font-size:12.5px;line-height:1;white-space:pre;color:#222;font-weight:400;left:389.00px;transform-origin:0 0;transform:scaleX(0.9529);text-shadow:0 0 0.400px #222;">GROSS PROFIT</div>
<div style="position:absolute;top:591.72px;font-size:27.5px;line-height:1;white-space:pre;color:#16122E;font-weight:700;left:389.30px;transform-origin:0 0;transform:scaleX(0.8748);-webkit-text-stroke:0.450px #16122E;">$1,759,200</div>
<div style="position:absolute;top:645.70px;font-size:13px;line-height:1;white-space:pre;color:#555;font-weight:400;left:390.50px;transform-origin:0 0;transform:scaleX(1.0316);text-shadow:0 0 0.400px #555;">Target:</div>
<div style="position:absolute;top:648.42px;font-size:12.5px;line-height:1;white-space:pre;color:#4a4a4a;font-weight:700;left:440.00px;transform-origin:0 0;transform:scaleX(0.9750);">$1,623,000</div>
<svg style="position:absolute;left:555.6px;top:569.4px;" width="80" height="80" viewBox="0 0 80 80"><path d="M26.69 59.00A23.2 23.2 0 0 1 37.98 16.89" fill="none" stroke="#C9CACE" stroke-width="11.0"/><path d="M37.98 16.89A23.2 23.2 0 0 1 53.31 59.00" fill="none" stroke="#09A56C" stroke-width="11.0"/></svg>
<div style="position:absolute;top:642.87px;font-size:11.5px;line-height:1;white-space:pre;color:#09A56C;font-weight:700;left:579.04px;transform-origin:50% 0;transform:scaleX(1.0326);">+8.4%</div>
<div style="position:absolute;left:692px;top:535px;width:282px;height:151px;background:#FCFCFC;border-radius:10px;box-shadow:9.500px 10px 4.500px rgba(126,132,168,0.56);"></div>
<div style="position:absolute;top:565.92px;font-size:12.5px;line-height:1;white-space:pre;color:#222;font-weight:400;left:705.00px;transform-origin:0 0;transform:scaleX(0.9718);text-shadow:0 0 0.400px #222;">EBIT</div>
<div style="position:absolute;top:593.68px;font-size:24px;line-height:1;white-space:pre;color:#16122E;font-weight:700;left:705.30px;transform-origin:0 0;transform:scaleX(0.8831);-webkit-text-stroke:0.450px #16122E;">$981,889</div>
<div style="position:absolute;top:645.70px;font-size:13px;line-height:1;white-space:pre;color:#555;font-weight:400;left:706.50px;transform-origin:0 0;transform:scaleX(1.0316);text-shadow:0 0 0.400px #555;">Target:</div>
<div style="position:absolute;top:648.42px;font-size:12.5px;line-height:1;white-space:pre;color:#4a4a4a;font-weight:700;left:756.00px;transform-origin:0 0;transform:scaleX(1.0357);">$849,000</div>
<svg style="position:absolute;left:871.6px;top:569.4px;" width="80" height="80" viewBox="0 0 80 80"><path d="M26.69 59.00A23.2 23.2 0 0 1 35.18 17.31" fill="none" stroke="#C9CACE" stroke-width="11.0"/><path d="M35.18 17.31A23.2 23.2 0 0 1 53.31 59.00" fill="none" stroke="#09A56C" stroke-width="11.0"/></svg>
<div style="position:absolute;top:642.87px;font-size:11.5px;line-height:1;white-space:pre;color:#09A56C;font-weight:700;left:891.84px;transform-origin:50% 0;transform:scaleX(0.9409);">+15.7%</div>
<div style="position:absolute;left:1008px;top:535px;width:282px;height:151px;background:#FCFCFC;border-radius:10px;box-shadow:9.500px 10px 4.500px rgba(126,132,168,0.56);"></div>
<div style="position:absolute;top:565.92px;font-size:12.5px;line-height:1;white-space:pre;color:#222;font-weight:400;left:1021.00px;transform-origin:0 0;transform:scaleX(0.9584);text-shadow:0 0 0.400px #222;">NET PROFIT</div>
<div style="position:absolute;top:593.68px;font-size:24px;line-height:1;white-space:pre;color:#16122E;font-weight:700;left:1021.30px;transform-origin:0 0;transform:scaleX(0.9330);-webkit-text-stroke:0.450px #16122E;">$658,835</div>
<div style="position:absolute;top:645.70px;font-size:13px;line-height:1;white-space:pre;color:#555;font-weight:400;left:1022.50px;transform-origin:0 0;transform:scaleX(1.0316);text-shadow:0 0 0.400px #555;">Target:</div>
<div style="position:absolute;top:648.42px;font-size:12.5px;line-height:1;white-space:pre;color:#4a4a4a;font-weight:700;left:1072.00px;transform-origin:0 0;transform:scaleX(1.0357);">$654,000</div>
<svg style="position:absolute;left:1187.6px;top:569.4px;" width="80" height="80" viewBox="0 0 80 80"><path d="M26.69 59.00A23.2 23.2 0 0 1 39.60 16.80" fill="none" stroke="#C9CACE" stroke-width="11.0"/><path d="M39.60 16.80A23.2 23.2 0 0 1 53.31 59.00" fill="none" stroke="#09A56C" stroke-width="11.0"/></svg>
<div style="position:absolute;top:642.87px;font-size:11.5px;line-height:1;white-space:pre;color:#09A56C;font-weight:700;left:1211.04px;transform-origin:50% 0;">+0.7%</div>
<div style="position:absolute;left:56px;top:738px;width:598px;height:132px;background:#0E0A29;border-radius:8px;box-shadow:7px 8px 13px 0 rgba(112,98,180,0.9);"></div>
<div style="position:absolute;top:752.11px;font-size:17px;line-height:1;white-space:pre;color:#fff;font-weight:700;left:181.50px;transform-origin:0 0;transform:scaleX(0.9307);-webkit-text-stroke:0.300px #fff;">Employee Net Promoter Score (eNPS)</div>
<div style="position:absolute;top:752.11px;font-size:17px;line-height:1;white-space:pre;color:#fff;font-weight:700;left:508.95px;transform-origin:100% 0;transform:scaleX(0.9324);-webkit-text-stroke:0.300px #fff;">3-Months Trend</div>
<div style="position:absolute;top:775.92px;font-size:19px;line-height:1;white-space:pre;color:#5FDBE9;font-weight:700;left:547.87px;transform-origin:100% 0;transform:scaleX(0.8558);-webkit-text-stroke:0.300px #5FDBE9;">POSITIVE</div>
<svg style="position:absolute;left:79.9px;top:760.6px;" width="80" height="80" viewBox="0 0 80 80"><path d="M25.08 65.85A29.849999999999998 29.849999999999998 0 1 1 57.12 15.55" fill="none" stroke="#5FDBE9" stroke-width="13.899999999999999"/><path d="M57.12 15.55A29.849999999999998 29.849999999999998 0 0 1 54.92 65.85" fill="none" stroke="#FCFCFC" stroke-width="13.899999999999999"/></svg>
<div style="position:absolute;top:830.99px;font-size:9.7px;line-height:1;white-space:pre;color:#fff;font-weight:700;left:72.90px;transform-origin:0 0;transform:scaleX(0.9529);">-100</div>
<div style="position:absolute;top:830.99px;font-size:9.7px;line-height:1;white-space:pre;color:#fff;font-weight:700;left:144.20px;transform-origin:0 0;transform:scaleX(0.8788);">+100</div>
<div style="position:absolute;top:834.38px;font-size:22px;line-height:1;white-space:pre;color:#5FDBE9;font-weight:700;left:97.74px;transform-origin:50% 0;transform:scaleX(0.9432);">+23</div>
<div style="position:absolute;left:195.8px;top:817.6px;width:8.7px;height:33.2px;background:#FCFCFC;"></div>
<div style="position:absolute;left:195.35px;top:809.78px;width:0;height:0;"><div style="position:absolute;left:0;top:0;transform-origin:0 0;transform:rotate(-90deg) scaleX(0.9);font-size:12.500px;line-height:1;white-space:pre;color:#5FDBE9;-webkit-text-stroke:0.350px #5FDBE9;">22</div></div>
<div style="position:absolute;left:221.5px;top:811.5px;width:8.7px;height:39.3px;background:#FCFCFC;"></div>
<div style="position:absolute;left:221.01px;top:803.74px;width:0;height:0;"><div style="position:absolute;left:0;top:0;transform-origin:0 0;transform:rotate(-90deg) scaleX(0.9);font-size:12.500px;line-height:1;white-space:pre;color:#5FDBE9;-webkit-text-stroke:0.350px #5FDBE9;">26</div></div>
<div style="position:absolute;left:247.1px;top:813.0px;width:8.7px;height:37.8px;background:#FCFCFC;"></div>
<div style="position:absolute;left:246.67px;top:805.25px;width:0;height:0;"><div style="position:absolute;left:0;top:0;transform-origin:0 0;transform:rotate(-90deg) scaleX(0.9);font-size:12.500px;line-height:1;white-space:pre;color:#5FDBE9;-webkit-text-stroke:0.350px #5FDBE9;">25</div></div>
<div style="position:absolute;left:272.8px;top:813.0px;width:8.7px;height:37.8px;background:#FCFCFC;"></div>
<div style="position:absolute;left:272.33px;top:805.25px;width:0;height:0;"><div style="position:absolute;left:0;top:0;transform-origin:0 0;transform:rotate(-90deg) scaleX(0.9);font-size:12.500px;line-height:1;white-space:pre;color:#5FDBE9;-webkit-text-stroke:0.350px #5FDBE9;">25</div></div>
<div style="position:absolute;left:298.4px;top:826.6px;width:8.7px;height:24.2px;background:#FCFCFC;"></div>
<div style="position:absolute;left:297.99px;top:818.84px;width:0;height:0;"><div style="position:absolute;left:0;top:0;transform-origin:0 0;transform:rotate(-90deg) scaleX(0.9);font-size:12.500px;line-height:1;white-space:pre;color:#5FDBE9;-webkit-text-stroke:0.350px #5FDBE9;">16</div></div>
<div style="position:absolute;left:324.1px;top:834.2px;width:8.7px;height:16.6px;background:#FCFCFC;"></div>
<div style="position:absolute;left:323.65px;top:826.39px;width:0;height:0;"><div style="position:absolute;left:0;top:0;transform-origin:0 0;transform:rotate(-90deg) scaleX(0.9);font-size:12.500px;line-height:1;white-space:pre;color:#5FDBE9;-webkit-text-stroke:0.350px #5FDBE9;">11</div></div>
<div style="position:absolute;left:349.8px;top:843.2px;width:8.7px;height:7.5px;background:#FCFCFC;"></div>
<div style="position:absolute;left:349.31px;top:835.45px;width:0;height:0;"><div style="position:absolute;left:0;top:0;transform-origin:0 0;transform:rotate(-90deg) scaleX(0.9);font-size:12.500px;line-height:1;white-space:pre;color:#5FDBE9;-webkit-text-stroke:0.350px #5FDBE9;">5</div></div>
<div style="position:absolute;left:375.4px;top:802.5px;width:8.7px;height:48.3px;background:#FCFCFC;"></div>
<div style="position:absolute;left:374.97px;top:794.68px;width:0;height:0;"><div style="position:absolute;left:0;top:0;transform-origin:0 0;transform:rotate(-90deg) scaleX(0.9);font-size:12.500px;line-height:1;white-space:pre;color:#5FDBE9;-webkit-text-stroke:0.350px #5FDBE9;">32</div></div>
<div style="position:absolute;left:401.1px;top:819.1px;width:8.7px;height:31.7px;background:#FCFCFC;"></div>
<div style="position:absolute;left:400.63px;top:811.29px;width:0;height:0;"><div style="position:absolute;left:0;top:0;transform-origin:0 0;transform:rotate(-90deg) scaleX(0.9);font-size:12.500px;line-height:1;white-space:pre;color:#5FDBE9;-webkit-text-stroke:0.350px #5FDBE9;">21</div></div>
<div style="position:absolute;left:426.7px;top:802.5px;width:8.7px;height:48.3px;background:#FCFCFC;"></div>
<div style="position:absolute;left:426.29px;top:794.68px;width:0;height:0;"><div style="position:absolute;left:0;top:0;transform-origin:0 0;transform:rotate(-90deg) scaleX(0.9);font-size:12.500px;line-height:1;white-space:pre;color:#5FDBE9;-webkit-text-stroke:0.350px #5FDBE9;">32</div></div>
<div style="position:absolute;left:452.4px;top:802.5px;width:8.7px;height:48.3px;background:#FCFCFC;"></div>
<div style="position:absolute;left:451.95px;top:794.68px;width:0;height:0;"><div style="position:absolute;left:0;top:0;transform-origin:0 0;transform:rotate(-90deg) scaleX(0.9);font-size:12.500px;line-height:1;white-space:pre;color:#5FDBE9;-webkit-text-stroke:0.350px #5FDBE9;">32</div></div>
<div style="position:absolute;left:478.1px;top:802.5px;width:8.7px;height:48.3px;background:#FCFCFC;"></div>
<div style="position:absolute;left:477.61px;top:794.68px;width:0;height:0;"><div style="position:absolute;left:0;top:0;transform-origin:0 0;transform:rotate(-90deg) scaleX(0.9);font-size:12.500px;line-height:1;white-space:pre;color:#5FDBE9;-webkit-text-stroke:0.350px #5FDBE9;">32</div></div>
<svg style="position:absolute;left:571px;top:802px;" width="54" height="54" viewBox="0 0 54 54"><ellipse cx="27.100" cy="27.300" rx="26.100" ry="24.700" fill="#09A56C"/><path d="M26.600 11.200l-9.400 10.400h5.400v19.500q0 2.300 4 2.300q4 0 4-2.300V21.600h5.400z" fill="#FCFCFC"/></svg>
<div style="position:absolute;left:692px;top:738px;width:598px;height:132px;background:#0E0A29;border-radius:8px;box-shadow:7px 8px 13px 0 rgba(112,98,180,0.9);"></div>
<div style="position:absolute;top:752.11px;font-size:17px;line-height:1;white-space:pre;color:#fff;font-weight:700;left:817.50px;transform-origin:0 0;transform:scaleX(0.9182);-webkit-text-stroke:0.300px #fff;">Customer Satisfaction (NPS)</div>
<div style="position:absolute;top:752.11px;font-size:17px;line-height:1;white-space:pre;color:#fff;font-weight:700;left:1144.95px;transform-origin:100% 0;transform:scaleX(0.9324);-webkit-text-stroke:0.300px #fff;">3-Months Trend</div>
<div style="position:absolute;top:775.92px;font-size:19px;line-height:1;white-space:pre;color:#5FDBE9;font-weight:700;left:1175.79px;transform-origin:100% 0;transform:scaleX(0.8619);-webkit-text-stroke:0.300px #5FDBE9;">NEGATIVE</div>
<svg style="position:absolute;left:715.6px;top:760.6px;" width="80" height="80" viewBox="0 0 80 80"><path d="M25.08 65.85A29.849999999999998 29.849999999999998 0 1 1 57.96 16.16" fill="none" stroke="#5FDBE9" stroke-width="13.899999999999999"/><path d="M57.96 16.16A29.849999999999998 29.849999999999998 0 0 1 54.92 65.85" fill="none" stroke="#FCFCFC" stroke-width="13.899999999999999"/></svg>
<div style="position:absolute;top:830.99px;font-size:9.7px;line-height:1;white-space:pre;color:#fff;font-weight:700;left:708.60px;transform-origin:0 0;transform:scaleX(0.9529);">-100</div>
<div style="position:absolute;top:830.99px;font-size:9.7px;line-height:1;white-space:pre;color:#fff;font-weight:700;left:779.90px;transform-origin:0 0;transform:scaleX(0.8788);">+100</div>
<div style="position:absolute;top:836.58px;font-size:22px;line-height:1;white-space:pre;color:#5FDBE9;font-weight:700;left:733.44px;transform-origin:50% 0;transform:scaleX(0.9593);">+24</div>
<div style="position:absolute;left:831.7px;top:820.6px;width:8.7px;height:30.2px;background:#FCFCFC;"></div>
<div style="position:absolute;left:831.25px;top:812.80px;width:0;height:0;"><div style="position:absolute;left:0;top:0;transform-origin:0 0;transform:rotate(-90deg) scaleX(0.9);font-size:12.500px;line-height:1;white-space:pre;color:#5FDBE9;-webkit-text-stroke:0.350px #5FDBE9;">20</div></div>
<div style="position:absolute;left:857.4px;top:808.5px;width:8.7px;height:42.3px;background:#FCFCFC;"></div>
<div style="position:absolute;left:856.91px;top:800.72px;width:0;height:0;"><div style="position:absolute;left:0;top:0;transform-origin:0 0;transform:rotate(-90deg) scaleX(0.9);font-size:12.500px;line-height:1;white-space:pre;color:#5FDBE9;-webkit-text-stroke:0.350px #5FDBE9;">28</div></div>
<div style="position:absolute;left:883.0px;top:799.5px;width:8.7px;height:51.3px;background:#FCFCFC;"></div>
<div style="position:absolute;left:882.57px;top:791.66px;width:0;height:0;"><div style="position:absolute;left:0;top:0;transform-origin:0 0;transform:rotate(-90deg) scaleX(0.9);font-size:12.500px;line-height:1;white-space:pre;color:#5FDBE9;-webkit-text-stroke:0.350px #5FDBE9;">34</div></div>
<div style="position:absolute;left:908.7px;top:817.6px;width:8.7px;height:33.2px;background:#FCFCFC;"></div>
<div style="position:absolute;left:908.23px;top:809.78px;width:0;height:0;"><div style="position:absolute;left:0;top:0;transform-origin:0 0;transform:rotate(-90deg) scaleX(0.9);font-size:12.500px;line-height:1;white-space:pre;color:#5FDBE9;-webkit-text-stroke:0.350px #5FDBE9;">22</div></div>
<div style="position:absolute;left:934.3px;top:822.1px;width:8.7px;height:28.7px;background:#FCFCFC;"></div>
<div style="position:absolute;left:933.89px;top:814.31px;width:0;height:0;"><div style="position:absolute;left:0;top:0;transform-origin:0 0;transform:rotate(-90deg) scaleX(0.9);font-size:12.500px;line-height:1;white-space:pre;color:#5FDBE9;-webkit-text-stroke:0.350px #5FDBE9;">19</div></div>
<div style="position:absolute;left:960.0px;top:822.1px;width:8.7px;height:28.7px;background:#FCFCFC;"></div>
<div style="position:absolute;left:959.55px;top:814.31px;width:0;height:0;"><div style="position:absolute;left:0;top:0;transform-origin:0 0;transform:rotate(-90deg) scaleX(0.9);font-size:12.500px;line-height:1;white-space:pre;color:#5FDBE9;-webkit-text-stroke:0.350px #5FDBE9;">19</div></div>
<div style="position:absolute;left:985.7px;top:817.6px;width:8.7px;height:33.2px;background:#FCFCFC;"></div>
<div style="position:absolute;left:985.21px;top:809.78px;width:0;height:0;"><div style="position:absolute;left:0;top:0;transform-origin:0 0;transform:rotate(-90deg) scaleX(0.9);font-size:12.500px;line-height:1;white-space:pre;color:#5FDBE9;-webkit-text-stroke:0.350px #5FDBE9;">22</div></div>
<div style="position:absolute;left:1011.3px;top:811.5px;width:8.7px;height:39.3px;background:#FCFCFC;"></div>
<div style="position:absolute;left:1010.87px;top:803.74px;width:0;height:0;"><div style="position:absolute;left:0;top:0;transform-origin:0 0;transform:rotate(-90deg) scaleX(0.9);font-size:12.500px;line-height:1;white-space:pre;color:#5FDBE9;-webkit-text-stroke:0.350px #5FDBE9;">26</div></div>
<div style="position:absolute;left:1037.0px;top:799.5px;width:8.7px;height:51.3px;background:#FCFCFC;"></div>
<div style="position:absolute;left:1036.53px;top:791.66px;width:0;height:0;"><div style="position:absolute;left:0;top:0;transform-origin:0 0;transform:rotate(-90deg) scaleX(0.9);font-size:12.500px;line-height:1;white-space:pre;color:#5FDBE9;-webkit-text-stroke:0.350px #5FDBE9;">34</div></div>
<div style="position:absolute;left:1062.6px;top:811.5px;width:8.7px;height:39.3px;background:#FCFCFC;"></div>
<div style="position:absolute;left:1062.19px;top:803.74px;width:0;height:0;"><div style="position:absolute;left:0;top:0;transform-origin:0 0;transform:rotate(-90deg) scaleX(0.9);font-size:12.500px;line-height:1;white-space:pre;color:#5FDBE9;-webkit-text-stroke:0.350px #5FDBE9;">26</div></div>
<div style="position:absolute;left:1088.3px;top:819.1px;width:8.7px;height:31.7px;background:#FCFCFC;"></div>
<div style="position:absolute;left:1087.85px;top:811.29px;width:0;height:0;"><div style="position:absolute;left:0;top:0;transform-origin:0 0;transform:rotate(-90deg) scaleX(0.9);font-size:12.500px;line-height:1;white-space:pre;color:#5FDBE9;-webkit-text-stroke:0.350px #5FDBE9;">21</div></div>
<div style="position:absolute;left:1114.0px;top:823.6px;width:8.7px;height:27.2px;background:#FCFCFC;"></div>
<div style="position:absolute;left:1113.51px;top:815.82px;width:0;height:0;"><div style="position:absolute;left:0;top:0;transform-origin:0 0;transform:rotate(-90deg) scaleX(0.9);font-size:12.500px;line-height:1;white-space:pre;color:#5FDBE9;-webkit-text-stroke:0.350px #5FDBE9;">18</div></div>
<svg style="position:absolute;left:1206px;top:801px;" width="54" height="54" viewBox="0 0 54 54"><ellipse cx="27.100" cy="27" rx="26.100" ry="24.200" fill="#C8102E"/><path d="M27.600 43.100l-9.200-11h5.400V13.100q0-2.300 3.800-2.300q3.800 0 3.800 2.300V32.100h5.400z" fill="#FCFCFC"/></svg>
<div style="position:absolute;left:34px;top:887px;width:1280px;height:66px;overflow:hidden;">
<div style="position:absolute;left:18px;top:39px;width:601px;height:60px;background:#FCFCFC;border-radius:13px;box-shadow:9.500px 10px 4.500px rgba(126,132,168,0.56);"></div>
<div style="position:absolute;left:655px;top:39px;width:602px;height:60px;background:#FCFCFC;border-radius:13px;box-shadow:9.500px 10px 4.500px rgba(126,132,168,0.56);"></div>
<div style="position:absolute;left:777px;top:58px;width:129px;height:30px;background:#4C36C9;border-radius:7px;"></div>
<div style="position:absolute;left:1052px;top:58px;width:171px;height:30px;background:#4C36C9;border-radius:7px;"></div>
<div style="position:absolute;top:60.57px;font-size:13.5px;line-height:1;white-space:pre;color:#222;font-weight:400;left:45.00px;transform-origin:0 0;transform:scaleX(1.1274);">SALES vs EMPLOYEE COST</div>
</div>
<div style="position:absolute;left:0px;top:953px;width:1920px;height:40px;background:#E3E4E8;"></div>
<svg style="position:absolute;left:30px;top:965px;" width="12" height="14" viewBox="0 0 12 14"><path d="M9 1.500L3 7l6 5.500" fill="none" stroke="#9a9a9a" stroke-width="1.4"/></svg>
<svg style="position:absolute;left:70px;top:965px;" width="12" height="14" viewBox="0 0 12 14"><path d="M3 1.500L9 7l-6 5.500" fill="none" stroke="#9a9a9a" stroke-width="1.4"/></svg>
<div style="position:absolute;top:965.61px;font-size:17px;line-height:1;white-space:pre;color:#242424;font-weight:400;left:151.00px;transform-origin:0 0;">Data</div>
<div style="position:absolute;left:203px;top:961px;width:1px;height:24px;background:#d6d6d6;"></div>
<div style="position:absolute;left:209px;top:953px;width:107px;height:34.5px;background:#FCFCFC;border-radius:4px 4px 5px 5px;"></div>
<div style="position:absolute;top:961.61px;font-size:17px;line-height:1;white-space:pre;color:#1b1b1b;font-weight:400;left:219.30px;transform-origin:0 0;transform:scaleX(1.0269);-webkit-text-stroke:0.550px #1b1b1b;">Dashboard</div>
<div style="position:absolute;left:219px;top:983px;width:87px;height:2px;background:#107C41;"></div>
<div style="position:absolute;left:321px;top:961px;width:1px;height:24px;background:#d6d6d6;"></div>
<div style="position:absolute;top:965.61px;font-size:17px;line-height:1;white-space:pre;color:#242424;font-weight:400;left:339.50px;transform-origin:0 0;">©</div>
<div style="position:absolute;left:367px;top:961px;width:1px;height:24px;background:#d6d6d6;"></div>
<svg style="position:absolute;left:419px;top:964px;" width="16" height="16" viewBox="0 0 16 16"><path d="M8 1v14M1 8h14" stroke="#333" stroke-width="1.500"/></svg>
<div style="position:absolute;left:1154.5px;top:966.5px;width:3px;height:3px;background:#444;border-radius:0.800px;"></div>
<div style="position:absolute;left:1154.5px;top:971.7px;width:3px;height:3px;background:#444;border-radius:0.800px;"></div>
<div style="position:absolute;left:1154.5px;top:976.9px;width:3px;height:3px;background:#444;border-radius:0.800px;"></div>
<div style="position:absolute;left:1177px;top:962px;width:720px;height:21px;background:#FCFCFC;border-radius:11px;"></div>
<svg style="position:absolute;left:1182px;top:966px;" width="9" height="13" viewBox="0 0 9 13"><path d="M1 6.500L8 1v11z" fill="#6f6f72"/></svg>
<svg style="position:absolute;left:1882px;top:966px;" width="9" height="13" viewBox="0 0 9 13"><path d="M8 6.500L1 1v11z" fill="#6f6f72"/></svg>
<div style="position:absolute;left:1196px;top:967px;width:650px;height:11px;background:#767779;border-radius:6px;"></div>
<div style="position:absolute;left:0px;top:993px;width:1920px;height:27px;background:#FCFCFC;border-top:1px solid #d4d4d4;"></div>
<div style="position:absolute;top:1000.50px;font-size:13px;line-height:1;white-space:pre;color:#242424;font-weight:400;left:14.00px;transform-origin:0 0;transform:scaleX(0.9580);">Ready</div>
<div style="position:absolute;top:1000.50px;font-size:13px;line-height:1;white-space:pre;color:#242424;font-weight:400;left:70.00px;transform-origin:0 0;transform:scaleX(0.9595);">Calculate</div>
<svg style="position:absolute;left:146px;top:998px;" width="19" height="19" viewBox="0 0 19 19"><g fill="none" stroke="#333" stroke-width="1.200"><circle cx="9" cy="3.200" r="1.900"/><path d="M2 6.500c4 1.500 9 1.500 14 0M6.800 7.500v5l-3 5M11.200 7.500v4.500M6.800 12.500h2.500M11 12l6 6M17 12l-6 6"/></g></svg>
<div style="position:absolute;top:1000.50px;font-size:13px;line-height:1;white-space:pre;color:#1b1b1b;font-weight:400;left:169.30px;transform-origin:0 0;transform:scaleX(1.0746);-webkit-text-stroke:0.500px #1b1b1b;">Accessibility: Investigate</div>
<div style="position:absolute;left:1548px;top:994px;width:50px;height:26px;background:#E0E1E5;"></div>
<svg style="position:absolute;left:1564px;top:997.5px;" width="17" height="17" viewBox="0 0 17 17"><g fill="none" stroke="#3a3a3a" stroke-width="1.700"><rect x="1" y="1" width="15" height="15"/><path d="M6 1v15M11 1v15M1 6h15M1 11h15"/></g></svg>
<svg style="position:absolute;left:1614px;top:997.8px;" width="18" height="17" viewBox="0 0 18 17"><g fill="none" stroke="#3a3a3a"><rect x="0.800" y="0.800" width="16.400" height="15.400" stroke-width="1.500"/><rect x="4.300" y="4" width="9.400" height="9" stroke-width="1.200"/><path d="M6.300 6.700h5.400M6.300 8.600h5.400M6.300 10.500h5.400" stroke-width="0.900"/></g></svg>
<svg style="position:absolute;left:1664px;top:998.3px;" width="18" height="16.5" viewBox="0 0 18 16.5"><g fill="none" stroke="#3a3a3a" stroke-width="1.500"><rect x="0.800" y="0.800" width="16.400" height="14.600"/><path d="M0.800 9h10.500V0.800M4.500 0.800V9"/></g></svg>
<div style="position:absolute;left:1705px;top:1006px;width:10px;height:1.3px;background:#333;"></div>
<div style="position:absolute;left:1721px;top:1006px;width:125px;height:1px;background:#777;"></div>
<div style="position:absolute;left:1781px;top:1000px;width:6px;height:14px;background:#666;border-radius:1px;"></div>
<svg style="position:absolute;left:1851px;top:1001px;" width="12" height="12" viewBox="0 0 12 12"><path d="M6 1v10M1 6h10" stroke="#333" stroke-width="1.200"/></svg>
<div style="position:absolute;top:1001.00px;font-size:13px;line-height:1;white-space:pre;color:#242424;font-weight:400;left:1879.00px;transform-origin:0 0;transform:scaleX(0.9023);">100%</div>
<svg style="position:absolute;left:830px;top:953px" width="260" height="57" viewBox="0 96 1920 421"><g fill="none" stroke="#D5D5D9" stroke-width="46" stroke-linejoin="round"><path d="M135 215V330Q135 410 230 410H400Q480 410 480 330V215"/><path d="M570 105V330Q570 410 650 410H1275"/><path d="M790 235V410M935 235V410M1085 235V410"/><path d="M1395 125H1210V240M1200 310Q1250 230 1320 240Q1395 260 1390 340Q1380 410 1300 420"/><path d="M1535 265Q1640 200 1730 250Q1790 300 1780 420H1390"/></g><g fill="#D5D5D9"><path d="M265 115l40 40-40 40-40-40zM378 110l40 40-40 40-40-40zM1640 110l40 40-40 40-40-40z"/></g></svg>
</body></html>
